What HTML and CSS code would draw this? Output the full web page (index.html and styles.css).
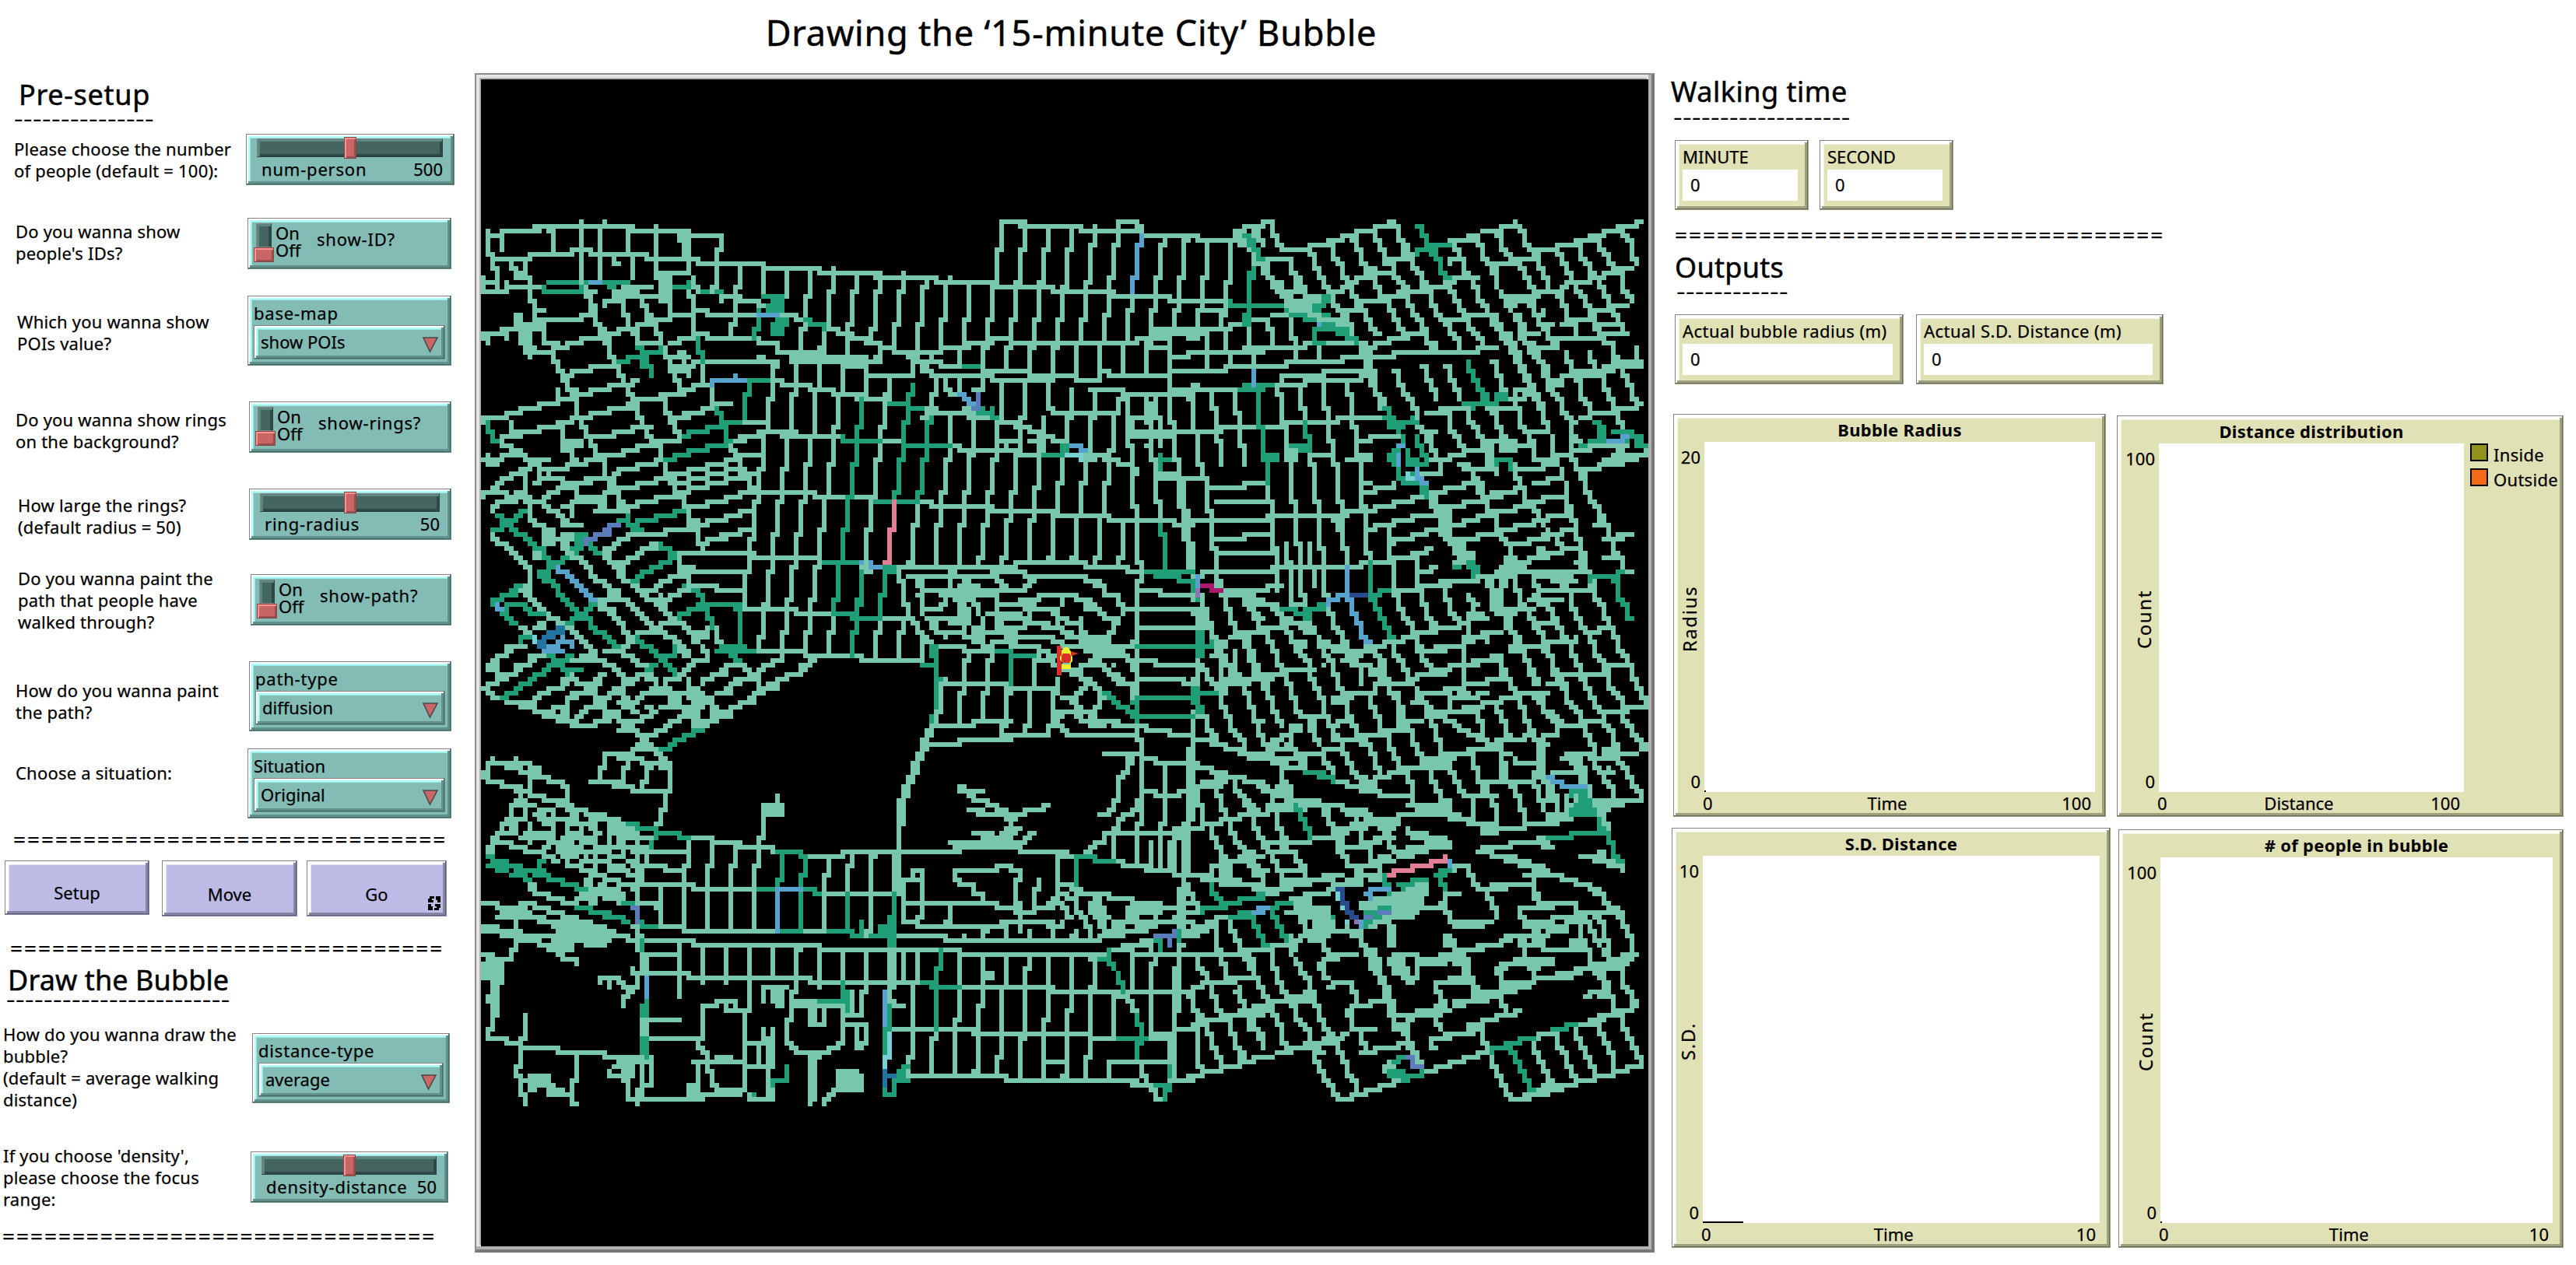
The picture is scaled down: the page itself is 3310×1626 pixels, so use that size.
FILE: index.html
```html
<!DOCTYPE html>
<html lang="en">
<head>
<meta charset="utf-8">
<title>Drawing the ‘15-minute City’ Bubble</title>
<link rel="stylesheet" href="styles.css">
</head>
<body>
<div class="app">
  <aside class="controls">
    <h2 class="heading heading-setup">Pre-setup</h2>
    <div class="dashes dashes-setup">---------------</div>

    <div class="row row-people">
      <p class="label">Please choose the number<br>of people (default = 100):</p>
      <div class="panel slider"><div class="channel"><i class="knob"></i></div><div class="slider-text"><span class="name">num-person</span><span>500</span></div></div>
    </div>
    <div class="row row-ids">
      <p class="label">Do you wanna show<br>people's IDs?</p>
      <div class="panel switch"><div class="toggle"><i></i></div><div class="onoff">On<br>Off</div><span class="name">show-ID?</span></div>
    </div>
    <div class="row row-pois">
      <p class="label">Which you wanna show<br>POIs value?</p>
      <div class="panel chooser"><span class="name">base-map</span><div class="panel choice"><span>show POIs</span><svg viewBox="0 0 20 20"><path d="M1 1H19L9.500 19Z"/></svg></div></div>
    </div>
    <div class="row row-rings">
      <p class="label">Do you wanna show rings<br>on the background?</p>
      <div class="panel switch"><div class="toggle"><i></i></div><div class="onoff">On<br>Off</div><span class="name">show-rings?</span></div>
    </div>
    <div class="row row-radius">
      <p class="label">How large the rings?<br>(default radius = 50)</p>
      <div class="panel slider"><div class="channel"><i class="knob"></i></div><div class="slider-text"><span class="name">ring-radius</span><span>50</span></div></div>
    </div>
    <div class="row row-path">
      <p class="label">Do you wanna paint the<br>path that people have<br>walked through?</p>
      <div class="panel switch"><div class="toggle"><i></i></div><div class="onoff">On<br>Off</div><span class="name">show-path?</span></div>
    </div>
    <div class="row row-type">
      <p class="label">How do you wanna paint<br>the path?</p>
      <div class="panel chooser"><span class="name">path-type</span><div class="panel choice"><span>diffusion</span><svg viewBox="0 0 20 20"><path d="M1 1H19L9.500 19Z"/></svg></div></div>
    </div>
    <div class="row row-situation">
      <p class="label">Choose a situation:</p>
      <div class="panel chooser"><span>Situation</span><div class="panel choice"><span>Original</span><svg viewBox="0 0 20 20"><path d="M1 1H19L9.500 19Z"/></svg></div></div>
    </div>

    <div class="equals equals-a">===============================</div>
    <div class="buttons">
      <button class="panel button button-setup">Setup</button>
      <button class="panel button button-move">Move</button>
      <button class="panel button button-go">Go<svg class="forever" viewBox="0 0 16 18"><path id="turn" d="M2 0H8V3H5V5H7V8H0V3H2ZM10 0H16V8H12V5H10Z"/><path transform="rotate(180 8 9)" d="M2 0H8V3H5V5H7V8H0V3H2ZM10 0H16V8H12V5H10Z"/></svg></button>
    </div>
    <div class="equals equals-b">===============================</div>

    <h2 class="heading heading-draw">Draw the Bubble</h2>
    <div class="dashes dashes-draw">------------------------</div>
    <div class="row row-distance">
      <p class="label">How do you wanna draw the<br>bubble?<br>(default = average walking<br>distance)</p>
      <div class="panel chooser"><span class="name">distance-type</span><div class="panel choice"><span>average</span><svg viewBox="0 0 20 20"><path d="M1 1H19L9.500 19Z"/></svg></div></div>
    </div>
    <div class="row row-density">
      <p class="label">If you choose 'density',<br>please choose the focus<br>range:</p>
      <div class="panel slider"><div class="channel"><i class="knob"></i></div><div class="slider-text"><span class="name">density-distance</span><span>50</span></div></div>
    </div>
    <div class="equals equals-c">===============================</div>
  </aside>

  <main class="world">
    <h1 class="title">Drawing the ‘15-minute City’ Bubble</h1>
    <div class="view">
      <canvas id="map" width="250" height="250"></canvas>
      <svg class="agents" viewBox="0 0 40 44">
        <path d="M4 0H8L10 2V38H4Z" fill="#d92f28"/>
        <path d="M18 6L32 10L20 14Z" fill="#d92f28"/>
        <path d="M12 4L14 2H18L20 4L22 8V12L24 14V20L22 22V30H10V24L12 22L8 18V14L10 12V6Z" fill="#efee30"/>
        <rect x="11" y="22" width="10" height="2" fill="#78c6ad"/>
        <path d="M12 10H20L22 13V19L20 22H12L10 19V13Z" fill="#d92f28"/>
      </svg>
    </div>
  </main>

  <section class="results">
    <h2 class="heading heading-walk">Walking time</h2>
    <div class="dashes dashes-walk">-------------------</div>
    <div class="monitors monitors-time">
      <div class="panel monitor monitor-short"><span>MINUTE</span><output>0</output></div>
      <div class="panel monitor monitor-short"><span>SECOND</span><output>0</output></div>
    </div>
    <div class="equals equals-d">===================================</div>
    <h2 class="heading heading-out">Outputs</h2>
    <div class="dashes dashes-out">------------</div>
    <div class="monitors monitors-out">
      <div class="panel monitor monitor-radius"><span>Actual bubble radius (m)</span><output>0</output></div>
      <div class="panel monitor monitor-sd"><span>Actual S.D. Distance (m)</span><output>0</output></div>
    </div>
    <div class="plots plots-top">
      <div class="panel plot plot-radius">
        <h3>Bubble Radius</h3>
        <div class="yaxis"><span>20</span><span class="ylabel">Radius</span><span>0</span></div>
        <div class="area"><i class="pen pen-dot"></i></div>
        <div class="xaxis"><span>0</span><span>Time</span><span>100</span></div>
      </div>
      <div class="panel plot plot-dist">
        <h3>Distance distribution</h3>
        <div class="yaxis"><span>100</span><span class="ylabel">Count</span><span>0</span></div>
        <div class="area"></div>
        <div class="legend"><div><i class="swatch inside"></i>Inside</div><div><i class="swatch outside"></i>Outside</div></div>
        <div class="xaxis"><span>0</span><span>Distance</span><span>100</span></div>
      </div>
    </div>
    <div class="plots plots-bottom">
      <div class="panel plot plot-sd">
        <h3>S.D. Distance</h3>
        <div class="yaxis"><span>10</span><span class="ylabel">S.D.</span><span>0</span></div>
        <div class="area"><i class="pen pen-line"></i></div>
        <div class="xaxis"><span>0</span><span>Time</span><span>10</span></div>
      </div>
      <div class="panel plot plot-people">
        <h3># of people in bubble</h3>
        <div class="yaxis"><span>100</span><span class="ylabel">Count</span><span>0</span></div>
        <div class="area"><i class="pen pen-dot"></i></div>
        <div class="xaxis"><span>0</span><span>Time</span><span>10</span></div>
      </div>
    </div>
  </section>
</div>
<script src="map.js"></script>
</body>
</html>
```
FILE: styles.css
```css
* { box-sizing: border-box; }
body { margin: 0; background: #fff; color: #000; font: 22px/28px "Noto Sans", "Open Sans", sans-serif; -webkit-text-stroke: .25px #000; }
h1, h2, h3, p { margin: 0; font-weight: 400; }
.app { width: 3310px; height: 1626px; display: grid; grid-template-columns: 610px 1516px 1184px; overflow: hidden; white-space: nowrap; }

/* Raised panels shared by every widget */
.panel {
  --face: #82bcb5; --lite: #b0ffff; --mid: #9de6de; --dark: #456560; --dim: #62908b;
  background: var(--face);
  border: 1px solid #848484;
  border-right-color: var(--dim); border-bottom-color: var(--dim);
  box-shadow: inset -1px -1px var(--dark), inset 2px 2px #fff, inset -4px -4px var(--dim), inset 4px 4px var(--lite), inset 5px 5px var(--mid);
}
.monitor, .plot { --face: #e0e1b5; --lite: #fff; --mid: #f4f5dd; --dark: #6c6c56; --dim: #9e9f7e; }
.button { --face: #bcbce6; --lite: #fff; --mid: #e4e4fa; --dark: #5d5d7a; --dim: #8585a6; }

/* Headings and separators */
.heading { font-size: 36px; line-height: 44px; height: 44px; -webkit-text-stroke-width: .5px; }
.heading-setup { margin: 100px 0 0 24px; letter-spacing: .7px; }
.heading-draw { margin: 10px 0 0 10px; letter-spacing: .1px; }
.heading-walk { margin: 96px 0 0 21px; letter-spacing: .5px; }
.heading-out { margin: 11px 0 0 26px; letter-spacing: .3px; }
.dashes { font-size: 36px; line-height: 20px; height: 20px; letter-spacing: .4px; -webkit-text-stroke-width: 0; transform: scaleY(.75); transform-origin: 0 14px; }
.dashes-setup { margin: -3px 0 0 18px; }
.dashes-draw { margin: -9px 0 0 8px; }
.dashes-walk { margin: -1px 0 0 24px; }
.dashes-out { margin: -3px 0 0 28px; }
.equals { font-size: 28px; line-height: 20px; height: 20px; letter-spacing: 1.96px; }
.equals-a { margin: 16px 0 0 17px; }
.equals-b { margin: 30px 0 0 13px; }
.equals-c { margin: 32px 0 0 3px; }
.equals-d { margin: 21px 0 0 26px; }

/* Question rows */
.row { display: flex; align-items: flex-start; }
.row > .panel { flex: none; }
.label { flex: none; width: 318px; padding-left: 20px; letter-spacing: .2px; }
.row-people { height: 66px; margin-top: 11px; }
.row-people .label { width: 316px; padding-left: 18px; margin-top: 5px; }
.row-people .panel { width: 268px; }
.row-ids { height: 66px; margin-top: 42px; }
.row-ids .label { margin-top: 3px; }
.row-pois { height: 90px; margin-top: 34px; }
.row-pois .label { margin-top: 19px; padding-left: 22px; }
.row-rings { height: 66px; margin-top: 46px; }
.row-rings .label { width: 320px; margin-top: 9px; }
.row-radius { height: 66px; margin-top: 46px; }
.row-radius .label { width: 320px; padding-left: 23px; margin-top: 7px; }
.row-radius .panel { width: 260px; }
.row-path { height: 66px; margin-top: 44px; }
.row-path .label { width: 322px; padding-left: 23px; margin-top: -9px; }
.row-type { height: 90px; margin-top: 46px; }
.row-type .label { width: 320px; margin-top: 23px; }
.row-situation { height: 90px; margin-top: 22px; }
.row-situation .label { margin-top: 17px; }
.row-distance { height: 90px; margin-top: 35px; }
.row-distance .label { width: 324px; padding-left: 4px; margin-top: -13px; }
.row-density { height: 66px; margin-top: 62px; }
.row-density .label { width: 322px; padding-left: 4px; margin-top: -9px; }
.row-density .slider { width: 254px; }

/* Widgets */
.name { letter-spacing: .8px; }
.slider { height: 66px; padding: 5px 14px 0 13px; }
.channel { height: 24px; background: #456560; border: 1px solid #7b8d8b; border-color: #848484 #2e4340 #2e4340 #848484; box-shadow: inset 3px 3px #5c8781, inset -3px -3px #304845; display: flex; justify-content: center; align-items: center; }
.knob, .toggle i { background: #c86666; border: 1px solid #884848; box-shadow: inset 2px 2px #ff9090, inset -2px -2px #994e4e; }
.knob { flex: none; width: 16px; height: 28px; }
.slider-text { display: flex; justify-content: space-between; padding-left: 6px; margin-top: 1px; }
.switch { height: 66px; width: 262px; padding: 6px 0 0 7px; display: flex; }
.row-rings .switch { width: 260px; }
.row-path .switch { width: 258px; }
.toggle { width: 26px; height: 50px; display: flex; flex-direction: column; align-items: center; }
.toggle::before { content: ""; width: 18px; height: 31px; background: #456560; border: 1px solid #848484; border-right-color: #2e4340; box-shadow: inset 3px 3px #5c8781, inset -3px 0 #304845; }
.toggle i { width: 26px; height: 20px; }
.onoff { line-height: 22px; margin: 1px 0 0 2px; width: 53px; }
.switch > span { margin-top: 6px; }
.chooser { width: 262px; height: 90px; padding: 7px 7px 0; }
.row-type .chooser { width: 260px; }
.row-distance .chooser { width: 254px; }
.chooser > span { display: block; height: 30px; }
.choice { height: 44px; padding: 6px 8px 0; display: flex; justify-content: space-between; }
.choice svg { width: 20px; height: 22px; margin-top: 7px; fill: #c86666; stroke: #484848; stroke-width: 1.500; }
.buttons { display: flex; align-items: flex-start; padding-left: 6px; margin-top: 18px; height: 72px; }
.button { font: inherit; padding: 13px 0 0; height: 72px; text-align: center; position: relative; color: #000; }
.button-setup { width: 186px; height: 70px; padding-top: 11px; }
.button-move { width: 174px; margin-left: 16px; }
.button-go { width: 180px; margin-left: 12px; }
.forever { position: absolute; right: 7px; bottom: 7px; width: 16px; height: 18px; fill: #000; }

/* World view */
.world { display: flex; flex-direction: column; }
.title { height: 94px; padding: 16px 0 0 17px; text-align: center; font-size: 45px; line-height: 52px; letter-spacing: .8px; -webkit-text-stroke-width: .5px; }
.view { position: relative; width: 1516px; height: 1516px; padding: 6px; background: #e6e6e6; border: 2px solid #8c8c8c; border-right-color: #777; border-bottom-color: #777; box-shadow: inset -2px -2px #777, inset -6px -6px #b2b2b2; }
.view canvas { display: block; width: 1500px; height: 1500px; background: #000; image-rendering: pixelated; box-shadow: -2px -2px #b2b2b2; }
.agents { position: absolute; left: 742px; top: 734px; width: 40px; height: 44px; }

/* Monitors */
.monitors { display: flex; }
.monitors-time { margin: 21px 0 0 26px; gap: 14px; }
.monitors-out { margin: 21px 0 0 26px; gap: 16px; }
.monitor { height: 90px; padding: 6px 13px 0 9px; display: flex; flex-direction: column; }
.monitor-short { width: 172px; }
.monitor-radius { width: 294px; }
.monitor-sd { width: 318px; }
.monitor > span { height: 31px; letter-spacing: .45px; }
.monitor-short > span { letter-spacing: 0; }
.monitor output { height: 40px; background: #fff; padding: 5px 0 0 10px; }

/* Plots */
.plots { display: flex; align-items: flex-start; }
.plots-top { margin: 38px 0 0 24px; }
.plots-bottom { margin: 14px 0 0 22px; }
.plot { display: grid; grid-template-rows: 35px 1fr 31px; }
.plot-radius { width: 556px; height: 518px; grid-template-columns: 39px 502px 1fr; }
.plot-dist { width: 574px; height: 516px; margin: 2px 0 0 14px; grid-template-columns: 53px 392px 1fr; }
.plot-sd { width: 564px; height: 540px; grid-template-columns: 39px 510px 1fr; }
.plot-people { width: 572px; height: 538px; margin: 2px 0 0 10px; grid-template-columns: 53px 504px 1fr; }
.plot h3 { grid-column: 2; padding-top: 5px; text-align: center; font-size: 22px; font-weight: 700; letter-spacing: .3px; -webkit-text-stroke-width: 0; }
.yaxis { grid-column: 1; grid-row: 2; display: flex; flex-direction: column; justify-content: space-between; align-items: flex-end; padding: 5px 5px 0 0; }
.ylabel { writing-mode: vertical-rl; transform: rotate(180deg); font-size: 24px; letter-spacing: 1.600px; }
.area { grid-column: 2; grid-row: 2; background: #fff; display: flex; align-items: flex-end; }
.pen { height: 2px; background: #000; }
.pen-dot { width: 2px; }
.pen-line { width: 52px; }
.xaxis { grid-column: 2; grid-row: 3; display: flex; justify-content: space-between; padding: 0 5px 0 0; margin-left: -2px; }
.legend { grid-column: 3; grid-row: 2; padding-left: 8px; }
.legend div { display: flex; height: 32px; letter-spacing: .3px; }
.swatch { width: 23px; height: 23px; border: 2px solid #000; margin-right: 7px; }
.inside { background: #91911e; }
.outside { background: #f16a15; }
```
FILE: map.js
```js
// Street network. Each sheet covers one part of the town: x, y is its corner on
// the 1500-unit view, sx and sy its drawing scale. Streets are polylines,
// an entry that starts with R is a filled block.
const COLORS = {
  light: '#78c6ad', dark: '#1f9e78', blue: '#57a3cc', cyan: '#77d0d1', sea: '#2173a0',
  indigo: '#5b7dbc', navy: '#2a4b8c', purple: '#936fb6', pink: '#e07e95', magenta: '#a8196b'
};
const SHEETS = [
{ x: -18, y: 138, sx: 3, sy: 2.6133, streets: {
light: `81,150 81,212 99,220 99,270 117,280 117,322 60,322;81,165 135,165 135,215;135,165 135,150 280,150;260,133 640,133 640,149 855,149 855,290;855,165 980,165 980,210 962,215 962,320 945,330 945,352;333,150 333,215;315,149 333,149;99,243 240,243 240,227 405,227 405,212 480,212 480,227 690,227 690,243 890,243 890,258 1145,258 1145,274 1360,274 1360,290 1560,290;440,115 440,320;513,150 513,310;620,150 620,212 638,220 638,310;728,130 728,300;567,240 575,258 590,258;530,117 530,133;170,250 170,270 190,275;R 181,285 234,310;225,250 225,300 243,305 243,335;60,305 60,352 160,352 150,322;117,322 117,345;150,337 290,337;243,340 243,380 261,390 261,470;R 740,283 790,388;R 828,155 862,235;R 812,155 862,185;R 560,345 665,375;R 180,425 215,480;R 200,460 250,530;R 218,530 250,562;R 760,283 862,297;880,300 890,345;450,330 450,370 477,375 477,410 495,430 495,450 513,470 513,490 540,520 549,560 567,575;590,590 590,620 603,650 620,665 638,710 660,740 675,790 690,810 710,850 740,870 746,905;765,930 765,960 800,985 800,1030 830,1050 855,1090 855,1135 890,1150 890,1195 909,1200 909,1225;R 470,390 505,425;R 505,470 535,500;R 470,345 500,357;530,400 530,384 610,384;600,369 720,369;600,384 603,415 620,430 620,460 638,480 650,510 680,525 730,525;270,447 440,447 440,430 500,430;R 595,330 715,345;675,375 690,420 715,445 735,480 750,510 765,560 790,590 800,630 825,660 825,695;780,375 780,430 870,430 880,415 930,415;700,447 790,447;260,414 300,414;60,494 150,494 150,510;135,478 290,478 280,462 235,462;855,350 873,380 873,490 930,495 930,510 1110,510 1150,525 1197,525 1197,555 1377,555;925,430 1120,430;980,385 980,369 1060,369;1035,384 1120,384 1120,400 1150,400;1215,430 1270,430 1270,447 1305,447 1305,480;505,495 590,495 590,478 650,478 650,462 730,462;440,510 540,510;310,525 380,540 380,525 440,525 440,510;250,540 270,555 335,555 335,540 390,540;243,555 243,575;261,465 297,480 297,520 320,530;335,555 345,600 370,630 385,660 405,690 423,710 423,760 440,790 459,830 480,850 500,880 530,910 531,970 560,990 585,1020 585,1050 603,1080 620,1095;60,508 80,508 80,525;400,619 470,619 470,604 560,604 570,588;370,635 405,635;R 400,680 430,720;410,697 480,697 480,682 550,682 550,666 620,666 650,650;350,680 350,712 420,712;205,745 275,745 275,728 350,728;60,790 80,776 150,776 150,760 205,760 205,745;400,776 480,776 480,760 550,760 550,745 640,745 620,728 680,712 770,712;170,790 170,822 280,822 280,806 360,806 350,790 410,790;500,838 570,838 570,822 640,822 640,806 710,806;135,838 210,838;130,850 160,869 180,885 210,885 215,900 250,917;60,917 140,917 140,900 200,900;80,905 80,932 125,932;225,917 320,917;R 380,848 448,875;360,810 370,850 405,890 405,917 430,917;365,885 405,885;455,917 530,917;385,932 460,932;200,948 240,948 250,920;R 235,920 285,940;275,948 390,948 390,932;510,900 600,900 600,885 650,885 650,869 740,869;710,853 810,853 810,838;600,948 660,948 660,932 720,932 720,917 760,917;150,980 200,965 225,965 225,1040;320,950 320,970;280,960 280,980 370,980;260,995 285,995;360,995 470,995;455,980 550,980 600,948;650,995 720,995 720,980 800,980;60,1027 160,1027 170,1042 240,1042;R 180,1020 232,1050;95,1012 140,995 150,980;60,1027 60,1045;290,1042 350,1027 360,1010 430,1010 430,1030 440,1042 530,1042;525,1027 590,1027;580,1010 660,1010 650,995;R 540,990 575,1015;655,1057 730,1057 730,1042 820,1042;590,1073 655,1073 655,1057;100,1090 120,1073 135,1057 180,1057 180,1042;230,1057 300,1057 300,1073;240,1060 240,1105 270,1137 300,1137;300,1073 350,1090 350,1105 370,1110 400,1140 440,1137;360,1073 405,1073 405,1105;400,1057 440,1057 440,1042;470,1057 520,1057 520,1080;490,1090 625,1090;440,1057 520,1057;R 505,1050 535,1080;830,697 750,697;830,760 900,760;905,745 950,745 945,680;950,728 1020,728;850,776 780,776 800,810 810,838;1062,790 1160,790;R 775,600 850,625;760,572 850,572;815,556 840,556 840,600;790,525 820,525 820,510 870,510;855,635 855,604 890,588;770,715 770,745 785,770;770,965 850,965 850,948 925,948 925,932 990,932 990,917 1060,917 1060,902 1145,902;805,995 860,995 860,980 925,980 925,965 1000,965 1000,948 1070,948;R 775,980 810,1000;800,1027 860,1027 860,1012 925,1012 925,995 990,995 990,980 1060,980 1060,965 1125,965;840,1073 930,1073 930,1057 990,1057 990,1042 1050,1042 1050,1027 1345,1027 1345,1042 1560,1042;855,1121 930,1137 930,1120 990,1120 990,1105 1050,1105 1050,1090 1105,1090;R 848,1115 880,1145;775,1152 895,1152;980,1168 1050,1168 1050,1152 1110,1152;909,1197 930,1197 930,1183 990,1183;810,1230 1110,1230;850,1293 1090,1293;830,1340 960,1340 960,1355 1070,1355;1053,920 1053,940 1071,960 1089,990 1107,1010 1125,1010;1020,869 1035,885 1035,917;1030,853 1070,853 1065,838;873,588 1200,588;R 1172,588 1203,610;1179,600 1179,710 1161,712 1161,820;909,590 909,660;1120,572 1150,572;825,682 875,682 870,666 930,666;1170,650 1220,650 1220,666 1325,666 1325,682 1415,682 1415,697 1540,697;1251,565 1251,588 1540,588;1251,572 1540,572;R 1352,540 1385,590;1269,590 1269,690 1251,700 1251,820;1359,590 1359,675;1341,690 1341,830;1449,600 1449,690 1431,700 1431,800 1413,810 1413,925 1395,935 1395,1030;1540,590 1540,690;1450,604 1540,604;1125,822 1260,822;1060,838 1125,838;1210,838 1440,838;1143,840 1143,945 1125,950 1125,1050 1107,1060 1107,1180 1089,1190 1089,1290 1071,1300 1071,1400;1233,840 1233,940 1215,950 1215,1060 1197,1060 1197,1160 1179,1170 1179,1280 1161,1290 1161,1400 1143,1410 1143,1500 1125,1510 1125,1560;1323,840 1323,930 1305,940 1305,1050 1287,1060 1287,1160 1269,1170 1269,1270 1251,1280 1251,1380 1233,1390 1233,1490 1215,1500 1215,1560;1377,1050 1377,1150 1359,1160 1359,1265 1341,1280 1341,1380 1323,1390 1323,1480 1305,1490 1305,1560;1413,1440 1413,1490 1395,1500 1395,1560;1540,1150 1540,1280;1557,1050 1557,1150;1089,1245 1365,1245 1365,1277;1060,1417 1270,1417 1270,1433 1405,1433;1045,1402 1070,1402;1053,265 1053,325 1035,335 1035,455 1017,465 1017,500;1143,280 1143,360;1233,280 1233,370;1323,280 1323,355 1305,365 1305,440;1287,480 1287,550;1413,270 1413,345 1395,355 1395,475;1377,490 1377,590;1503,300 1503,350 1485,355 1485,455 1467,465 1467,590;1395,478 1430,478 1430,494 1490,494;1470,510 1545,510 1545,525;100,1168 100,1183 150,1200 180,1230 210,1262 245,1285 245,1320 225,1335;225,1355 260,1386 300,1417 340,1450 370,1465;380,1480 420,1495 450,1525 490,1560;200,1355 245,1355;255,1230 261,1245 290,1230;200,1480 240,1500 250,1490;270,1465 300,1465 290,1480 260,1480;145,1560 170,1545 230,1545;R 290,1145 340,1205;340,1183 430,1183;R 360,1160 395,1220;370,1168 430,1168;375,1137 440,1137;395,1245 430,1245 450,1262 480,1290 520,1325 560,1355 600,1390 650,1420 700,1455 750,1490 810,1530 830,1545;R 525,1225 558,1250;540,1250 590,1290 620,1320 650,1340 710,1380 750,1410 790,1450 850,1485 880,1500;365,1205 400,1250;505,1395 560,1435 600,1480 640,1510;530,1230 550,1215 580,1199 610,1183 640,1168 740,1168 780,1152;560,1277 610,1260 650,1245 670,1220 720,1215 740,1195;R 578,1275 608,1300;R 540,1350 590,1380;R 705,1190 735,1210;820,1245 820,1270 840,1277 855,1290 855,1340;820,1277 880,1277;R 815,1285 850,1300;650,1355 730,1355 730,1340 780,1325 790,1308 830,1308;750,1370 740,1375;730,1402 780,1386 800,1370 850,1355;510,1417 560,1417;500,1386 570,1386;R 740,1400 770,1425;R 775,1445 810,1470;660,1512 680,1497 740,1495 750,1465 820,1465;640,1510 640,1530 600,1545 530,1560;850,1500 920,1497 930,1480 962,1480 965,1520 985,1528;870,1528 930,1510 900,1500;R 868,1510 905,1535;1080,1558 1300,1558`,
dark: `297,337 297,352 440,352 440,330;306,322 430,322;459,322 625,322;549,337 575,337;800,337 855,337 855,322;905,352 930,352;960,352 985,352;R 1170,362 1223,388;R 1135,362 1223,372;R 1155,390 1223,420;R 1190,440 1240,468;R 1172,455 1223,500;1125,415 1125,470 1107,480 1107,510;1305,447 1330,447 1330,462 1378,462 1378,485;R 650,535 680,547;680,556 750,556 750,540;670,572 620,572 620,588 585,588;R 670,560 700,605;711,600 711,635;891,505 891,550 909,560 909,590;962,745 980,780 1000,815 1000,853;830,838 850,838 850,822 930,822 930,806 1000,806;765,917 800,917 800,900 850,900 850,885 925,885 925,869 1005,869;R 990,845 1025,860;975,790 1060,790;1071,780 1071,712 1089,705 1089,650 1165,650;80,790 85,810 99,820 99,835 117,855;115,1105 135,1105;R 128,1113 178,1145;190,1121 190,1105 210,1105 205,1090 230,1090;100,1152 135,1152;165,1152 190,1152 190,1168 225,1168 240,1199 265,1199 265,1215 300,1215;297,1230 310,1262 370,1262 370,1245 390,1245;R 308,1258 340,1280;R 272,1290 320,1313;300,1325 330,1325 345,1355 370,1385 400,1402 420,1417;180,1340 210,1340;165,1355 190,1355;100,1402 100,1386 130,1386 140,1370 190,1370;130,1433 150,1433 155,1405 220,1402 220,1417 245,1417 245,1433 300,1433;150,1450 170,1450 190,1465;R 415,1425 465,1440;400,1450 480,1450;380,1465 405,1465;455,1417 480,1417 490,1402;470,1465 500,1480 520,1497 550,1512 560,1530 590,1545;R 400,1207 445,1222;423,1225 420,1168 450,1168;R 435,1175 450,1215;477,1199 480,1215 500,1215 500,1230 520,1230;580,1120 625,1120 620,1105;615,1137 660,1137;635,1152 680,1152;650,1120 725,1120 725,1105 800,1105 800,1090 845,1090;745,1199 750,1215 790,1215 800,1230 790,1245 765,1260 735,1275 700,1290 670,1300 660,1325 635,1325;200,1528 230,1512 250,1512;1370,1262 1515,1262;1521,710 1521,805 1503,810 1503,930 1485,940 1485,1040 1467,1045 1467,1150 1449,1160 1449,1260;1431,1270 1431,1380 1413,1390 1413,1435 1510,1435;1521,1300 1521,1390 1503,1400 1503,1490 1485,1500 1485,1560;1445,838 1450,853 1560,853;1480,1450 1560,1450;1053,1410 1053,1540;1035,1417 1053,1417;R 975,1540 1075,1550;R 958,1550 1020,1562;1065,1560 1115,1560;890,1402 1045,1402;870,1355 890,1355 900,1386 910,1395;850,1417 935,1417;930,1417 930,1450 945,1450 945,1480;815,1450 820,1433 860,1433;650,1510 660,1528 680,1528;675,1545 710,1545 735,1560;835,1340 840,1340;795,1560 805,1560`,
blue: `477,322 513,322;1125,430 1200,430;945,665 945,650 1075,650;1035,635 1035,650;117,1405 117,1417 140,1417;350,1280 350,1293 395,1293 395,1308 420,1325 440,1340 440,1355 465,1355 480,1386 500,1386;350,1528 405,1528 405,1545;R 305,1538 355,1550;368,1510 368,1528;R 290,1553 375,1566;1521,1262 1521,1262;1557,1262 1557,1277`,
cyan: `261,1515 261,1528`,
sea: `R 272,1523 305,1548;297,1512 330,1512 320,1497 360,1497 355,1480 375,1480`,
indigo: `459,1199 477,1183 500,1183 495,1168 540,1168 535,1152 555,1152 555,1137 590,1137` } },

{ x: 482, y: 138, sx: 3, sy: 2.6133, streets: {
light: `0,290 100,290 100,305;75,305 310,305 310,321 540,321 540,337 760,337 760,353 1000,353 1000,369 1210,369 1210,384 1430,384;3,290 3,355;543,320 543,212 561,212 561,117 655,117;630,133 870,133 870,149 1105,149;1010,149 1010,117 1085,117 1100,133 1100,149;1110,165 1320,165 1320,180 1470,180;R 1455,142 1490,195;1490,133 1560,133;1540,150 1551,180;1495,149 1495,133;1470,190 1510,196 1530,212 1535,240;R 1525,235 1560,265;651,140 651,212 633,215 633,320 615,325 615,440 597,450 597,525;741,140 741,212 723,215 723,320 705,325 705,430 687,440 687,520;831,140 831,212 813,215 813,320 795,330 795,430 777,440 777,520;921,130 921,195 903,200 903,320 885,325 885,430 867,440 867,520;1011,150 1011,195 993,200 993,300 975,310 975,425 957,435 957,520;1065,370 1065,410 1047,420 1047,520;1191,170 1191,195 1173,200 1173,300 1155,310 1155,410 1137,415 1137,500;1263,180 1263,300 1245,305 1245,410 1227,420 1227,490;1353,190 1353,300 1335,305 1335,410;1443,190 1443,315 1425,325 1425,410 1407,425 1407,475;1317,490 1317,415 1425,415;93,310 93,350 75,355 75,475 57,480 57,510 0,510;183,285 183,350 165,355 165,460 147,465 147,550;273,320 273,335 255,340 255,460 237,465 237,560;345,330 345,440 327,445 327,550;435,330 435,440 417,445 417,525;525,340 525,440 507,445 507,510;363,300 363,315;1263,180 1285,180;410,525 530,525;510,510 590,510;590,525 1090,525 1090,510 1210,510;330,540 440,540;140,556 335,556;30,510 40,525 100,525 100,540 140,540 150,556;1137,478 1450,478 1450,462 1490,462;1150,494 1340,494;1209,490 1209,680;R 1112,510 1145,545;0,572 40,572 40,700;0,604 40,604;50,588 95,588 95,540;R 70,565 100,580;40,635 225,635 219,570;R 200,560 245,580;237,570 255,600 270,615 295,619;290,635 530,635 520,650;245,588 330,588 330,604 480,604;265,604 280,604;291,565 291,590;399,550 399,600;489,560 507,545 507,530;489,560 489,680 445,682;489,620 670,620;520,650 760,650;R 660,628 760,655;760,635 850,635;579,615 579,560 597,545 597,530;687,530 669,550 669,620;759,530 759,630;780,540 760,540;849,540 849,650 940,650 939,530;1029,630 1029,530;1119,520 1119,630;940,620 980,620 980,635 1209,635;1110,540 1209,540;1209,620 1430,620 1430,604 1560,604;1215,572 1285,572 1285,556 1560,556;1353,490 1353,610;1300,510 1350,500;1443,560 1443,600;1533,560 1533,605;1425,480 1425,545;1515,550 1515,447 1560,447;1280,510 1300,510;0,697 40,697;0,712 110,712 110,700;129,650 129,700 111,710 111,800 93,810 93,910 75,920 75,1050;95,853 175,853;0,1042 80,1042;309,640 309,680 291,690 291,750;340,635 345,660 370,680 385,697;399,640 399,690;270,745 315,745;250,776 280,776 280,760 450,760 430,776 530,776;410,745 450,745;363,770 363,900 345,920 345,1010 327,1030 327,1065;453,780 453,880 435,900 435,1010 417,1020 417,1070;543,780 543,910 525,915 525,1010 507,1020 507,1090;561,660 561,780;651,650 651,770 633,780 633,880 615,900 615,1010 597,1020 597,1090;741,660 741,745;723,770 723,820;705,850 705,1000 687,1010 687,1090;741,745 760,745 750,760 1010,760;831,680 831,760 813,780 813,850;900,682 1035,682 1035,697 1290,697;921,690 921,760 903,780 903,890;1011,760 1011,712 1040,700;993,765 993,880 975,890 975,990 957,1000 957,1090;795,910 795,990 777,1000 777,1090;885,910 885,990 867,1000 867,1090;540,790 640,790;610,806 670,806;665,822 730,822;540,853 640,853;579,865 579,875;400,885 640,885;355,869 400,869;620,900 710,900;660,853 730,853;700,838 765,838;R 697,815 732,890;750,853 810,853;880,900 980,900;885,917 925,917;950,917 1015,917 1010,932 1060,932;1047,700 1047,870;1040,776 1180,776;1040,838 1200,838;1040,822 1160,822;1170,822 1410,822;R 1112,705 1128,800;R 1128,720 1145,815;1155,700 1155,780;R 1045,770 1073,835;R 1165,770 1180,885;1137,800 1137,915 1155,920;1110,869 1137,869;1065,865 1065,940 1080,950 1080,965 1065,970 1065,1070 1083,1080 1083,1250 1100,1260 1100,1320 1083,1330 1083,1540;1209,700 1209,790 1227,790 1227,905 1245,920 1245,960;1155,920 1155,1050 1173,1060 1173,1120;R 1165,957 1235,985;1160,980 1355,980;R 1237,980 1272,1080;R 1255,1085 1290,1190;R 1273,1190 1308,1285;1218,1137 1305,1137;1209,682 1470,682;1299,666 1320,666;1285,712 1299,720 1299,820;1317,830 1317,935 1335,940 1335,970;1353,980 1353,1090;1371,690 1371,740 1389,750 1389,850 1407,860 1407,935;1461,690 1461,750 1479,760 1479,860 1497,870 1497,935;1380,806 1560,806;1360,1010 1500,1010 1500,995 1560,995;1353,1090 1371,1090 1371,1210 1389,1220 1389,1320 1407,1340;1385,1058 1560,1058;970,1120 1230,1120;1280,1120 1560,1120;1380,1183 1500,1183 1500,1168 1560,1168;1395,1230 1560,1230;1330,1293 1560,1293;1410,1355 1560,1355;1330,1300 1330,1310;250,1058 290,1058 290,1073 530,1073 530,1089 780,1089 780,1105 980,1105 980,1120;57,1060 57,1150 39,1155 39,1260;237,1065 237,1130 219,1140 219,1260 200,1262;327,1080 327,1130 309,1140 309,1260;417,1080 417,1130 399,1140 399,1265;507,1090 507,1130 489,1140 489,1240 471,1250 471,1270;597,1095 597,1115 579,1120 579,1240 561,1250 561,1270;687,1095 687,1115 669,1120 669,1240;759,1105 759,1230 741,1240 741,1255;849,1110 849,1230 831,1245;939,1115 939,1230 921,1240 921,1270;1029,1130 1029,1230 1011,1240 1011,1265;155,1277 620,1277;610,1262 890,1262 890,1277 1050,1277 1050,1293 1110,1293;165,1280 165,1320 183,1330 183,1400 201,1410 201,1440 240,1480 255,1500 255,1560;21,1270 21,1293 60,1293;93,1450 225,1450;93,1465 93,1490 75,1500 75,1560;183,1460 183,1480 165,1490 165,1560;200,1308 530,1308;R 355,1285 390,1300;230,1325 260,1325;240,1340 260,1340 270,1355;230,1370 255,1370 255,1440;255,1417 330,1417 345,1385 320,1370;363,1290 363,1350;270,1355 390,1355;320,1370 400,1370;R 375,1380 405,1395;400,1400 400,1410 430,1430;417,1320 440,1325;400,1340 465,1340;417,1340 417,1400;410,1355 430,1385;520,1293 650,1293 650,1308 890,1308;400,1355 440,1355 650,1355 665,1340;535,1308 543,1330 570,1340;660,1308 680,1325 690,1325;R 645,1330 680,1345;543,1355 543,1435;430,1370 540,1370;550,1402 680,1402;R 630,1380 705,1395;453,1380 470,1400 470,1440;400,1435 440,1435;270,1450 440,1450;550,1450 640,1450;500,1435 640,1435;R 660,1395 675,1460;650,1417 780,1417;R 265,1440 290,1465;R 283,1465 318,1485;355,1465 440,1465;430,1417 410,1417;489,1445 489,1480;300,1497 420,1497 420,1512 490,1512;417,1465 417,1490;R 255,1500 283,1535;R 283,1520 300,1535;345,1497 345,1515;453,1480 480,1480;460,1497 620,1497;550,1480 650,1480 650,1450;R 520,1430 550,1445;540,1465 560,1465;460,1528 490,1528 490,1500;R 570,1505 622,1535;520,1528 620,1528;620,1512 765,1512;660,1465 740,1465;730,1480 800,1480;790,1497 835,1497;820,1512 865,1512;700,1370 855,1370 855,1386 900,1386 890,1402 920,1402;795,1380 795,1400;660,1417 780,1417 750,1433;777,1430 777,1460;770,1450 820,1450 820,1465 870,1465 870,1480 885,1490 885,1550;910,1512 975,1512;880,1417 935,1417 935,1433 955,1433 955,1450 1015,1450;R 878,1400 925,1425;R 850,1435 875,1455;885,1325 930,1325 920,1340 960,1340 960,1355 975,1370 1010,1370 1010,1386 1020,1400 1035,1402 1020,1433;1010,1450 993,1470 993,1490 975,1500 975,1528;1030,1417 1320,1417;1290,1433 1320,1433;1090,1355 1180,1355 1180,1370 1330,1370;1083,1480 1340,1480;750,1528 800,1528;620,1545 710,1545;410,1560 540,1560;320,1545 420,1545;R 860,1515 925,1545;905,1528 970,1528;880,1560 1035,1560;1040,1545 1080,1528;1299,1290 1299,1340;1299,1370 1299,1390;R 1308,1412 1360,1490;1335,1385 1335,1400;1425,1375 1425,1400 1443,1420 1443,1450 1461,1480 1480,1500 1500,1528 1520,1545 1530,1560;1490,1385 1535,1390 1540,1430 1560,1450;1371,1460 1371,1490 1389,1510 1400,1540;R 1380,1520 1430,1545;1440,1515 1510,1510 1515,1497 1560,1497;1407,1325 1407,1370 1530,1370`,
dark: `410,604 475,604;1443,380 1443,400 1560,400;1515,430 1515,305 1533,300 1533,270;1497,440 1497,465;1510,435 1497,435;1490,165 1515,165 1515,180 1533,195 1550,220;1510,666 1560,666;1475,682 1560,682;1551,690 1551,800;219,660 219,680 201,690 201,780 183,790 183,910 165,920 165,1020 147,1030 147,1050;120,728 200,728;200,745 260,745;291,770 291,790 273,795 273,910 255,920 255,1025 237,1030 237,1050;0,853 85,853;190,869 355,869;70,1058 140,1058;155,1058 245,1058;21,710 21,805 3,810 3,930;R 465,738 498,765;490,760 530,760;525,740 525,776 550,776;715,900 800,900;R 788,865 820,890;1173,895 1173,950;1173,917 1215,917;R 105,1272 155,1295;111,1295 111,1365 93,1375 93,1450;21,1305 21,1390 3,1395 3,1500;0,1450 85,1450;0,1262 10,1262;1110,1293 1160,1293;1150,1308 1250,1308;1240,1325 1300,1325;1180,1293 1290,1293;1173,1130 1173,1165 1191,1175 1191,1290;1299,1335 1299,1360;1317,1380 1317,1390;R 285,1540 315,1567;R 535,1552 603,1567;1075,1545 1310,1545;R 1310,1492 1342,1567;1342,1545 1375,1545 1371,1525`,
blue: `1101,165 1101,195 1083,200 1083,300 1065,305 1065,355;1533,615 1533,670;390,697 415,697 415,712 435,712 435,728 460,728;825,869 870,869 870,885 890,885;21,1262 21,1262;57,1262 57,1277 100,1277;1317,1305 1317,1345`,
cyan: `805,900 867,900 867,915`,
indigo: `471,695 471,728 453,745`,
purple: `1317,1350 1317,1375`,
pink: `147,1055 147,1150 129,1155 129,1262 105,1262`,
magenta: `1330,1340 1375,1340 1375,1355 1410,1355` } },

{ x: 982, y: 138, sx: 2.9037, sy: 2.6133, streets: {
light: `0,133 70,133;60,117 105,117 105,150 118,165 118,180 135,190 150,215;32,133 50,165 65,190;140,212 240,212 240,196 310,196 310,180 370,180 370,165 415,165 415,150 480,150 480,133 535,133 535,117 555,117;555,133 575,133 575,165 590,190;R 583,190 613,230;625,230 630,265 650,280 655,310;R 652,315 683,345;5,180 10,195 30,225 50,250 75,270 75,290 100,310 120,330 135,360;R 60,250 90,283;R 95,315 145,345;R 112,345 230,360;R 145,375 250,420;R 130,360 180,375;R 215,360 280,392;R 235,420 285,437;R 270,437 385,465;R 335,455 385,468;70,245 130,240;155,240 175,240 175,270 190,285 200,320 215,335;R 182,300 213,350;240,212 250,240 260,260 280,290 300,310 305,345 325,360 330,385 350,400 350,415;320,200 335,220 335,250 355,260 370,290 380,320;390,170 410,200 430,215 440,245 455,260;485,140 485,170 500,190 520,225;R 513,235 560,265;R 443,268 493,295;485,290 485,320 505,350 520,370 535,400 550,425 570,440 575,480;305,353 370,353 385,337 400,337 400,322 430,306 480,306;490,285 560,285 560,265;555,250 560,290 575,310 600,330 600,353;560,243 620,243;395,345 415,380 440,400;440,384 510,384 530,368 600,368;580,353 700,353 720,337 780,320 800,306 860,306;345,415 455,415 450,430 470,450 490,490 505,500;480,540 480,525 540,525 540,510 610,510 610,494 685,494 690,540;590,494 575,478;600,384 620,410 640,430 655,470 680,480;690,370 710,410 730,430 755,460 765,490 790,510 795,545;R 685,525 718,560;770,330 785,370 800,400 820,430 905,430 905,415;745,447 830,440 840,470 870,490 885,530;865,540 930,540;R 430,510 460,535;550,556 875,556;355,572 560,572;150,588 370,588;0,604 160,604;130,655 135,635 300,635 290,619 480,619;215,650 440,650;0,540 230,540 230,525 400,525;R 425,530 475,580;R 443,580 475,635;R 427,628 493,640;R 460,640 493,670;480,680 500,690 505,740;R 495,705 528,735;100,430 165,430;85,447 85,475 105,480 105,530;172,440 172,490 190,510 190,575;276,530 276,575;15,445 15,530;30,550 30,600;15,447 90,447;R 355,415 388,437;400,470 400,495;760,180 870,180;870,180 870,165 830,165;885,150 950,150 950,133 1030,133 1045,150 1045,175 1060,190 1065,215;1005,117 1015,117;785,200 800,212 800,225;765,260 765,243 820,243 820,270 840,290 850,320 870,340 875,370 890,390 910,400;870,180 885,190 885,220 905,240 905,258 1010,258 1010,243 1100,243;930,165 955,165 955,190 970,210 985,240;R 983,235 1060,250;R 1060,205 1085,250;1080,227 1095,240;R 915,265 945,297;R 930,297 945,340;R 948,340 962,375;R 966,375 1010,407;R 982,407 997,420;R 1000,420 1028,450;R 1018,450 1045,515;R 1035,515 1080,530;1055,540 1070,550;R 1072,540 1100,580;R 1088,580 1118,600;R 1105,600 1135,640;R 1122,640 1190,670;1135,670 1160,690;960,375 1080,375;1000,384 1085,384 1085,368;1100,260 1105,290 1130,310 1135,340 1150,353;1030,260 1050,290 1060,320 1080,340;R 1075,340 1100,375;R 895,385 912,430;R 912,430 947,465;R 930,455 962,485;R 948,485 1000,520;R 965,510 1015,535;R 982,535 1020,560;R 1000,555 1032,600;R 1018,595 1050,625;R 1035,625 1068,660;R 1052,655 1083,690;R 1070,690 1100,720;R 1088,718 1115,735;1110,740 1110,775 1130,790 1130,830;R 1140,830 1152,895;R 1140,895 1170,940;R 1175,940 1190,985;1200,990 1200,1060;R 1192,1060 1222,1110;R 1208,1110 1240,1130;1233,1130 1233,1170 1250,1180 1250,1230;R 1245,1230 1275,1285;R 1227,1255 1275,1270;1265,1285 1285,1300;1100,227 1110,212 1160,212 1160,196 1230,196 1230,180 1300,180 1285,165 1330,165 1340,150 1400,150 1390,133 1465,133 1460,117 1485,117;1165,212 1180,240 1195,270 1215,300 1215,320;1245,190 1255,225 1270,240 1290,270 1300,305;1320,180 1325,195 1345,210 1360,240 1375,270 1400,290;1410,150 1430,170 1435,200 1450,225 1460,245 1460,262;1370,274 1450,274;1330,290 1400,290 1410,330 1430,345 1440,385;1110,353 1180,353 1180,337 1225,322 1290,322 1300,306 1330,306;1165,350 1180,385 1195,420 1200,447;1240,330 1250,360 1270,385 1285,415 1300,430;1320,310 1330,345 1350,370 1355,395;1355,400 1430,400;1285,430 1310,415 1380,415 1390,450 1410,480;1200,447 1275,447;1180,460 1230,460 1233,490;1300,435 1310,460 1325,480;1320,494 1430,494;1210,447 1290,447;1325,465 1385,462;1060,384 1080,420 1100,440 1115,465 1130,490 1155,510 1165,535;1125,465 1150,462;1085,430 1110,430 1110,415;1050,494 1100,494;1140,510 1340,510 1345,525 1365,530 1375,560 1390,580;1095,540 1165,540;1460,540 1460,570 1475,600;1335,604 1475,604;1380,588 1480,588;1200,550 1200,580 1215,600 1215,620;1285,550 1285,580 1300,600;1235,619 1380,619 1350,604;1185,635 1330,635;R 1140,645 1190,670;1235,640 1245,670 1260,690 1275,720 1290,745 1285,760;1330,640 1345,670 1360,690 1370,720 1380,745;1410,610 1420,650 1440,670 1445,700 1465,715 1480,728;1255,776 1330,760;1280,760 1380,760 1380,745 1465,745;1390,750 1390,780 1410,800;1165,690 1185,710 1185,745 1200,760 1215,775;R 1210,780 1240,805;R 1210,805 1225,895;1210,885 1295,885 1290,869;1240,835 1260,855;1190,900 1215,905 1220,920;R 1218,910 1240,925;1240,948 1325,948 1325,932 1400,932;1330,932 1330,917;1350,917 1465,917;1370,900 1400,900 1400,885;1425,900 1500,900;1385,885 1410,885;1500,885 1500,905;1280,869 1425,869;1240,930 1250,960;R 1245,955 1275,985;1270,990 1270,1015 1285,1020 1290,1050 1305,1060 1315,1090 1320,1100;R 1312,1100 1345,1140;1300,1137 1340,1137;1350,1140 1355,1165 1375,1185;1330,1183 1400,1183;1385,1168 1450,1168;1375,1190 1375,1210 1390,1225 1410,1250 1410,1280 1430,1290 1450,1293;1335,1245 1410,1245;110,666 230,666;118,670 118,690 137,700 137,790 155,800 155,900;R 147,885 195,925;172,920 172,1050 190,1060 190,1190 205,1200 205,1260;205,670 205,730 222,740 222,790;240,895 240,930 258,940 258,1050 276,1060 276,1200 293,1210 293,1270;293,660 293,740 310,750 310,845 328,860 328,930 345,940 345,1050 363,1070 363,1080;380,660 380,690 398,700 398,800 415,810 415,900 432,910 432,1080 450,1090 450,1220 467,1240;340,776 520,776;150,791 350,791;0,806 150,806;240,900 320,900;375,917 475,917;R 410,895 475,915;460,838 590,838;415,853 470,853;0,870 0,930;370,1089 490,1089;80,1105 385,1105;0,1058 100,1058 101,1200 118,1210 118,1350;84,1005 84,1050;0,995 75,995;0,1120 90,1120;0,1168 100,1168;0,1230 110,1230;0,1293 115,1293;110,1277 440,1277;430,1262 550,1262;330,1110 350,1120;R 340,1110 370,1155;363,1150 363,1210 380,1220 380,1270;153,1195 153,1260;R 150,1255 180,1270;240,1195 240,1270;172,1285 172,1400;205,1285 205,1350 222,1370 222,1400;258,1285 258,1340;293,1290 293,1350 310,1370;0,1402 120,1402;130,1340 80,1345;0,1355 80,1355;170,1402 225,1402;550,619 570,619 570,650 590,670 590,690 610,700 620,730 640,745 640,775;655,604 680,604 680,640 690,670 710,690 720,720;745,604 770,604 770,640 785,660 800,690 800,720;915,588 940,588 940,620 955,640 960,660 975,680;1000,700 1005,682 1080,682;980,712 1040,712 1060,697 1085,697;725,745 840,745;670,760 770,760;R 722,735 770,770;765,770 765,800 785,820 795,850 805,870 830,880;830,750 830,780 850,790 860,820 885,840 885,870;920,760 940,745 1005,745;910,745 930,745 940,790 955,820 965,845;1000,728 1020,760 1030,790 1040,810;1090,730 1110,745 1115,780;650,760 640,775;650,790 655,820;R 655,815 718,835;R 670,835 700,860;690,870 710,885 710,915;690,917 760,917;760,900 820,900 820,885 895,885;730,925 730,965 660,965;R 895,865 928,935;910,853 1000,853;R 950,840 995,895;1040,822 1135,822;1060,838 1080,860 1080,900;R 1070,910 1165,920;1000,885 1010,869 1070,869;1010,948 1120,948 1120,932 1165,932;790,932 840,932;810,948 930,948 935,965;850,950 850,980 880,1000 885,1030 900,1050 905,1090;1000,930 1015,960 1025,1000 1040,1010 1045,1040 1060,1055;440,1027 490,1027 490,1012 560,1012 560,995;440,995 470,995;470,1089 495,1073 560,1073 560,1058 620,1058 620,1042 680,1042;455,1073 455,1080;480,1137 560,1137 560,1120 620,1120 620,1105 690,1105;455,1152 490,1152;540,1183 630,1183 630,1168 680,1168 680,1152 740,1152;537,1150 537,1235 555,1245 645,1245;560,1199 545,1190;620,1230 680,1230 680,1215 700,1215;690,1042 715,1042;690,1027 750,1027 750,1010 810,1010 810,995 870,995;715,1073 820,1073 820,1058 905,1058;745,1137 820,1137 820,1120 870,1120 880,1105 930,1105;760,1090 750,1100;790,1183 870,1183 870,1168 960,1168;895,1089 1010,1089 1010,1073 1080,1073;930,1105 940,1150;R 930,1090 945,1160;960,1168 980,1185 980,1200;865,1010 885,1020;920,1042 930,1027 1010,1027 1005,1010 1030,1010;1070,995 1130,995 1130,980 1190,980;885,1042 950,1042;1050,1058 1120,1058 1120,1042 1200,1042;1060,1058 1075,1080 1095,1100 1110,1130;950,1152 1010,1152 1010,1137 1085,1137;1070,1120 1130,1120 1130,1105 1220,1105;R 1122,1137 1138,1185;985,1215 1000,1199 1060,1199 1055,1183 1130,1183;1120,1168 1190,1168 1190,1152 1235,1152;1110,1168 1150,1168;1160,1183 1180,1200 1190,1215;1090,1230 1120,1215;1120,1230 1190,1230 1180,1215 1245,1215;1010,1262 1060,1262 1060,1245 1135,1245;R 983,1215 1000,1235;R 965,1235 1015,1265;R 950,1270 1050,1285;R 930,1285 1035,1300;R 685,1015 700,1045;R 685,1045 718,1075;R 702,1075 750,1110;R 720,1105 768,1170;R 740,1170 785,1185;R 755,1185 822,1215;R 772,1215 825,1235;R 790,1230 860,1250;R 775,1250 825,1265;R 860,1295 985,1315;R 912,1300 928,1345;R 950,1315 980,1345;R 895,1315 928,1345;R 915,1345 962,1420;R 930,1410 1010,1435;R 860,1420 900,1440;865,1308 985,1308;690,1277 715,1277;645,1293 690,1293;985,1293 1130,1293 1160,1308;1075,1308 1220,1308 1220,1293 1280,1293;R 1140,1293 1220,1325;1180,1325 1205,1350 1310,1355;1085,1310 1095,1350 1100,1370;1105,1386 1190,1386;1190,1355 1215,1355;1100,1355 1190,1355;R 1190,1320 1250,1335;1290,1330 1305,1355;R 1270,1310 1310,1325;1000,1310 1005,1340 1025,1360 1030,1390 1050,1400 1060,1440;1070,1380 1130,1400 1150,1430 1165,1465 1190,1490 1200,1530;1065,1386 1095,1375;1215,1370 1220,1400 1240,1420 1250,1460 1270,1480 1280,1512 1300,1530 1305,1555;1305,1355 1310,1390 1330,1410 1335,1440 1360,1465 1370,1490 1390,1510 1395,1550;1070,1480 1090,1465 1170,1465;1060,1450 1085,1450 1090,1490 1110,1500 1120,1540;R 965,1450 1000,1490;R 985,1485 1012,1510;R 1000,1510 1028,1545;R 985,1550 1040,1567;1015,1417 1070,1417;1110,1528 1240,1528 1240,1512;1270,1497 1310,1497 1330,1480 1380,1480;1120,1545 1130,1560;1210,1545 1215,1560;555,1260 555,1350 570,1370 575,1400 590,1430 600,1450;545,1355 660,1355;640,1340 755,1340;640,1245 640,1350;725,1325 860,1325;655,1355 660,1390 675,1400 680,1440 695,1450 710,1485;745,1340 750,1380 765,1390 770,1430 785,1440 790,1465 830,1465;700,1480 790,1480;835,1370 850,1390 870,1400;855,1400 855,1430;610,1450 620,1480 630,1497 720,1497;515,1528 590,1528 595,1512 640,1512;640,1510 650,1545 665,1560;690,1560 745,1545 810,1545;833,1440 833,1500;840,1450 910,1450;820,1560 815,1512 890,1512 890,1497 960,1497;R 810,1505 860,1535;900,1528 880,1512;905,1500 960,1490;0,1497 85,1497 70,1480 150,1480;20,1402 30,1430 50,1460 60,1480;0,1386 60,1386 55,1400;R 95,1405 128,1425;R 130,1440 175,1470;110,1425 130,1440 150,1480 170,1500 180,1530 215,1530;85,1500 85,1520 105,1540;170,1465 215,1465 200,1480 245,1480;R 218,1475 265,1500;240,1465 245,1475;270,1510 290,1535 340,1540;310,1417 325,1440 330,1465 345,1480 360,1520 380,1545;290,1560 300,1560;320,1560 490,1560;0,1512 20,1545;210,1545 225,1545`,
dark: `0,400 145,400;155,415 155,415;15,290 15,460;30,270 30,300;0,165 20,170 32,195 50,205 50,230 65,243;635,133 660,133 660,160 677,165 680,190;R 670,190 770,203;635,227 640,212 720,212;R 687,200 718,232;R 705,235 735,250;735,260 735,280 750,290 750,306 770,306;R 285,362 318,390;R 268,390 300,405;R 250,393 285,420;165,430 230,430;R 218,437 268,452;285,430 318,430;260,525 260,478 340,478;R 285,457 335,483;R 338,470 388,500;R 375,500 425,515;415,525 420,520;250,525 285,525;0,682 55,682;5,666 105,666;50,690 50,790 67,800 67,900;R 60,895 128,923;84,920 84,1000;222,790 225,830 240,840 240,885;R 165,862 248,877;R 197,877 248,892;833,585 833,605 850,615 850,635 868,645 875,670 890,685;R 878,690 910,735;R 930,692 980,718;R 912,715 945,732;810,728 930,728;850,745 850,745;R 513,738 545,752;R 528,752 545,765;R 513,765 562,782;R 530,782 595,812;590,791 650,791;625,775 625,790;R 563,812 580,830;588,835 588,855;640,835 640,860 660,870 660,885 678,900;R 548,877 580,892;R 530,892 562,925;555,930 555,930;R 600,880 615,905;R 600,905 650,938;R 668,895 685,940;R 650,920 685,940;572,940 572,980 640,980;R 583,988 665,1002;R 650,1000 683,1035;677,1045 677,1045;640,945 620,960;945,932 930,932;945,917 990,917 990,950;R 825,1255 858,1285;R 843,1270 876,1300;850,1310 850,1310;775,1277 800,1277;1297,791 1325,791;R 1312,797 1345,845;R 1280,848 1345,860;1250,869 1275,869;1370,822 1450,822;1425,853 1440,838 1470,838;R 1452,832 1487,875;1470,869 1500,869;467,1255 467,1390;500,1355 545,1355;R 460,1363 510,1378;R 460,1378 493,1393;480,1410 500,1417 505,1440 520,1450 520,1480 537,1485 540,1512 560,1512;130,1417 195,1417;218,1417 285,1417;R 182,1425 248,1442;R 218,1440 248,1458;270,1402 300,1402;1280,1325 1300,1308 1395,1308 1390,1293 1415,1293;1390,1310 1390,1370 1410,1380 1410,1405 1425,1410 1430,1435 1442,1450;R 1370,1312 1397,1330`,
blue: `32,615 32,670;276,462 276,462;570,869 595,869;572,895 572,935;640,945 640,965 655,980 675,995;1350,853 1410,853 1410,838 1430,838;380,1275 380,1390;345,1370 400,1370;310,1408 310,1386 350,1386;398,1390 398,1430 415,1440 415,1465 430,1470 440,1497 455,1512 455,1530 475,1530`,
cyan: `R 600,957 615,985;R 600,972 632,985`,
navy: `390,1371 455,1371` } },

{ x: -18, y: 728, sx: 3, sy: 2.529, streets: {
light: `55,140 80,140 80,125 110,125 110,110 155,108;110,93 180,93 180,78 200,78;185,63 245,63 245,47 280,30 310,30;75,62 120,62 120,47 100,47;R 75,55 108,85;110,78 115,90;110,32 160,32 160,17 200,5 230,3;75,150 100,155 110,170;235,32 290,32;145,185 265,185 265,170 285,170 285,155 320,155;200,200 265,200;255,215 340,215 330,200 380,200 380,185 400,170 430,170;310,140 365,140 360,125 380,125 370,108 430,108;290,230 380,230 370,215;350,245 430,245 420,230 460,215 440,215;400,262 500,262 490,245 550,245 530,230 590,230;405,93 405,105;450,200 510,200 515,185 550,170 490,170;R 488,160 540,190;R 540,205 592,237;520,200 550,215;420,125 510,125 500,108 530,95 510,95;R 450,120 495,145;480,140 500,160;400,170 460,155 410,155;410,47 530,47;R 415,38 540,52;440,30 475,30;500,15 500,30;525,62 575,62 590,78 610,93;530,15 600,15 610,30 640,32 650,47 670,62 690,70;540,155 600,155 600,140 560,140;R 597,105 630,130;575,140 630,125 620,108;605,108 660,108 650,93 710,93;620,170 580,185 620,185 660,185 680,170 700,155 745,155;R 705,130 770,145;R 720,110 745,130;700,93 710,108 735,115;760,110 820,110 840,93 855,78 850,62 890,47 930,47;770,125 790,155;765,155 810,155;R 775,160 828,195;660,215 600,200 640,200;700,200 720,215 730,215;R 760,190 825,200;740,200 770,195;R 828,193 882,235;R 578,238 630,250;R 597,250 647,265;625,245 680,245 690,230 730,215;580,275 660,275;720,275 770,275 770,262 800,245 830,230 880,230;R 640,283 738,295;R 668,295 700,315;R 650,313 718,325;630,337 660,330 720,337;610,352 640,352;735,340 740,352 765,365 785,380;785,385 785,475 765,480 765,520 745,530 745,565 728,580;865,245 900,245 920,262 880,262;910,245 970,245;940,230 1010,230 1000,215 1060,200 1050,185 1100,185 1090,170 1130,155 1150,155 1110,155;1130,140 1190,140 1185,125 1205,125 1210,108 1240,108;1230,93 1280,93 1280,78 1300,78 1290,62 1330,62 1340,47;1350,32 1520,32 1520,47 1560,47;1120,17 1310,17 1310,32 1340,32;1215,0 1215,50;1395,0 1395,25;R 1170,40 1220,52;810,155 900,155;R 850,130 900,160;855,108 855,125;820,100 830,93;R 810,15 870,25;900,5 930,15 925,40;830,30 860,32;900,125 910,108 950,108;940,93 990,93 985,78 1010,62 1060,62;R 900,165 952,190;860,170 930,170;880,185 900,200;R 880,205 895,240;R 935,190 965,205;950,210 1010,215;960,155 1010,155 1005,140 1040,130 1060,125;1030,125 1040,108 1130,108;R 1082,90 1133,112;1120,115 1125,130;1155,130 1170,130;1040,40 1050,62 1080,75 1095,90;1125,78 1150,78 1150,62 1185,62;1520,47 1560,47;75,380 250,380;81,380 81,440;60,420 80,420;60,410 80,410;99,365 99,380;188,365 188,380;150,395 215,395;R 236,388 287,418;200,410 240,410;243,410 243,480;75,442 140,442 140,457 200,457;R 218,460 250,480;180,472 250,472;250,427 320,427 320,442 375,442 370,457 387,460 387,505;207,480 207,500;180,503 230,503;240,490 300,490 300,503 390,503;R 165,512 197,530;215,518 265,518;R 345,510 410,525;R 345,500 395,515;170,530 170,555;R 218,510 232,570;270,533 340,533;R 380,525 465,540;R 320,520 342,565;R 250,540 300,555;R 145,557 230,570;R 270,540 285,570;300,563 360,563;R 380,555 430,570;R 395,540 430,555;R 450,545 540,555;R 165,570 175,600;130,578 180,578;135,595 135,605;R 180,572 195,600;R 230,570 250,600;R 285,570 320,585;R 325,570 342,630;R 380,570 395,645;R 400,570 430,585;R 470,555 500,600;R 485,555 600,570;R 150,595 200,605;R 240,595 320,600;R 430,572 485,585;R 540,570 555,630;R 110,603 145,618;R 175,603 195,615;R 215,603 250,615;R 270,603 285,630;R 395,603 430,615;R 432,590 450,645;R 485,590 500,640;R 540,590 640,600;575,578 610,578;R 485,603 520,615;R 95,618 125,645;R 190,618 270,628;R 290,615 345,628;R 360,618 395,632;R 400,622 485,630;R 430,632 485,645;R 540,603 560,645;R 560,603 660,618;R 580,612 610,645;R 95,633 180,645;R 235,628 250,645;R 308,632 380,645;R 345,632 410,675;R 395,645 430,660;R 165,648 235,660;R 290,645 320,660;R 270,660 305,675;R 415,645 450,675;R 430,660 470,675;R 485,640 500,690;R 500,648 540,660;R 540,648 610,660;R 75,648 108,675;R 218,663 285,675;R 285,676 340,690;R 325,690 360,705;R 360,680 430,690;R 375,690 395,705;R 380,708 450,720;R 450,675 465,705;R 432,693 480,705;R 470,663 540,675;R 485,690 500,740;R 430,723 500,735;R 500,693 540,705;R 535,663 555,720;R 540,680 610,690;R 555,708 610,720;R 595,660 610,690;R 470,738 540,750;R 560,723 630,735;R 540,708 560,735;R 615,738 650,750;R 450,753 480,785;R 470,750 485,765;R 525,753 540,800;R 505,768 540,780;R 525,753 590,765;R 580,768 640,780;R 475,783 530,815;R 520,783 560,800;R 560,783 590,795;R 520,800 575,830;R 575,800 610,812;R 415,813 505,828;R 470,828 500,840;R 450,800 475,815;R 575,815 610,828;R 578,830 592,842;R 430,798 448,812;R 612,618 680,630;R 595,648 640,660;R 612,693 640,705;R 630,708 650,720;R 648,600 665,960;R 648,720 683,770;R 665,708 770,720;R 670,618 720,630;R 665,648 700,660;R 685,680 700,705;640,670 850,670;R 632,783 665,795;760,716 770,730 840,730;640,776 880,776 880,791 1110,791;855,630 855,710 837,720 837,925;747,780 747,910;725,853 747,853;660,838 740,838;870,625 950,625 950,640 1060,640 1060,655 1180,655 1185,670 1205,670;945,650 945,700 927,710 927,925;1035,650 1035,700 1017,710 1017,925;1125,640 1125,710 1107,720 1107,925;1125,625 1143,625 1143,550;R 1135,513 1223,555;1197,485 1197,513;830,928 1190,928;1310,686 1450,686 1450,670 1560,670;1395,690 1395,730 1377,740 1377,925;1485,680 1485,715 1467,720 1467,795;1370,806 1560,806;1300,928 1385,928;1555,690 1555,910;1540,925 1540,940;R 235,765 268,797;255,806 320,806 320,822 370,822 370,838 430,838;740,913 830,913;60,838 120,838;110,853 180,853 175,868;230,853 215,838 265,838 265,853 320,853 320,868 370,868;R 197,845 232,872;120,883 145,883 135,865;190,868 235,868 225,883;155,883 210,883;188,895 188,920;R 235,875 310,890;R 270,890 360,902;R 60,907 125,935;60,928 210,928;R 130,937 630,947;R 360,877 430,900;R 345,892 485,915;R 325,907 540,920;R 345,920 575,937;R 325,950 555,965;R 310,960 412,995;R 345,995 375,1010;R 452,965 538,980;R 183,945 287,965;R 165,980 180,1025;190,965 190,990;365,1019 430,1019 430,1040;R 75,1012 180,1025;275,973 320,973;60,1003 100,1003;615,958 880,958 880,973 1365,973 1365,988 1560,988;R 632,905 660,920;657,930 657,990;670,943 680,943;R 55,1027 142,1087;R 95,1087 142,1100;R 90,1087 125,1208;82,1140 82,1160;99,1210 99,1235 81,1240 81,1277 160,1277 160,1292 210,1292;225,1195 225,1277 200,1277;207,1290 207,1370 190,1370 190,1398 207,1400 207,1460 225,1460 225,1490;215,1307 355,1307 355,1322 535,1322 535,1337 690,1337;423,1330 423,1415 405,1420 405,1485 430,1490;R 235,1392 325,1435;R 235,1435 270,1450;R 308,1437 378,1465;R 308,1420 342,1440;210,1413 235,1413;375,1460 400,1460;513,1095 513,1080 590,1080 600,1110 660,1110 657,1080;549,1090 549,1110;630,1110 630,1130 603,1140 603,1175;638,1045 638,1065 860,1065 860,1080 1330,1080 1330,1095 1560,1095;R 667,998 700,1070;700,1003 820,1003;819,965 819,1140;R 667,1210 700,1270;700,1216 810,1216;690,1277 910,1277 909,1170 960,1170 960,1155 1040,1155 1035,1185;909,985 909,1100;999,985 999,1100;1089,985 1089,1185 990,1185;1000,1170 1000,1180;1179,985 1179,1080;1290,988 1269,988 1269,1125;1251,1125 1275,1125;1359,990 1359,1110;1449,990 1449,1085;1540,990 1540,1125 1521,1130 1521,1200 1460,1200;1071,1190 1071,1445;1071,1292 1150,1292;1071,1368 1160,1368;1125,1300 1125,1360;R 1153,1285 1187,1380;R 1153,1380 1170,1480;R 1172,1437 1187,1480;1143,1245 1143,1290;1179,1245 1179,1270 1150,1280;1080,1475 1187,1475;1089,1455 1089,1475;891,1280 891,1307 915,1310 927,1330 927,1385 945,1390 945,1430 970,1430;880,1352 1070,1352;R 958,1332 1025,1345;891,1360 891,1420;R 847,1422 900,1465;R 955,1438 1062,1465;900,1460 960,1460;R 620,1468 915,1480;675,1350 675,1440;711,1345 711,1430 690,1430;657,1480 657,1490;R 650,1437 683,1475;620,1410 620,1470;R 595,1360 647,1405;R 595,1405 630,1418;560,1368 600,1368;R 580,1345 610,1360;620,1352 690,1352;549,1385 549,1398 600,1398;1143,1160 1143,1110 1240,1110;1251,1120 1251,1215 1233,1220 1233,1277 1251,1290 1275,1307 1290,1322 1395,1322 1395,1307 1435,1307 1430,1292 1449,1285 1449,1170;R 1172,1110 1223,1160;R 1190,1155 1223,1178;R 1250,1150 1350,1178;1350,1170 1450,1170;R 1315,1178 1350,1238;1377,1180 1377,1230 1330,1230;1485,1120 1485,1200;1460,1230 1540,1230 1540,1280 1521,1290;R 1495,1235 1512,1310;R 1495,1285 1530,1312;R 1315,1325 1350,1480;1323,1480 1323,1490;1350,1337 1365,1337;R 1422,1377 1512,1450;R 1512,1392 1530,1450;1415,1445 1400,1460 1377,1475 1377,1490;485,442 600,442;513,440 513,395 531,390 531,352 590,352 590,367 680,367;620,367 620,385 603,395 603,440;560,457 645,457 650,472 780,472;670,380 790,380;R 740,380 790,400;R 685,380 718,400;693,400 693,440 675,445 675,465`,
dark: `R 685,72 718,85;130,170 155,170 155,155 190,155 190,140 215,140 215,125 245,125 245,108 265,108 265,93 300,93 300,78 320,78;R 310,25 340,38;R 325,38 395,52;R 308,52 375,70;R 375,25 412,38;R 362,72 448,82;388,90 388,90;R 722,25 810,38;R 738,38 775,52;R 722,52 735,55;R 705,55 735,70;R 758,55 790,70;780,78 800,85 800,95;R 705,10 735,25;670,3 710,5;800,10 800,15;560,3 590,3;960,15 1080,15;1065,17 1115,17;1020,30 1050,47;1485,0 1485,35;740,337 790,337 790,322 805,322 800,305 840,305 840,290 880,290 880,275 915,275;615,578 660,578 660,594 735,594 730,625;735,610 825,610 825,625 860,625;712,635 712,660;1205,670 1290,670 1290,686 1305,690 1305,745 1287,750 1287,925;1215,680 1215,755 1197,765 1197,780;1120,791 1190,791;1300,791 1345,791 1345,806 1365,806;1210,928 1295,928;1390,928 1490,928 1490,943 1521,943 1521,905;1467,800 1467,925;1555,943 1555,943;75,686 105,686;R 95,693 160,705;75,716 210,716;R 110,708 215,722;R 110,725 160,735;R 165,738 230,752;R 180,723 300,735;R 255,723 285,750;R 255,738 322,750;R 272,695 305,705;279,710 279,735;R 220,753 250,767;310,760 375,760 375,776 430,776 430,791 450,791;415,853 480,853 480,868 540,868 530,883 610,883 605,898 625,898;600,838 645,838;R 667,890 683,915;680,913 735,913;R 667,950 683,995;R 685,1150 700,1165;R 667,1165 700,1208;R 667,1272 700,1328;693,1330 693,1340;1107,1460 1107,1460;1179,1430 1179,1413 1233,1413 1233,1365;1350,1155 1475,1155;R 1440,1090 1458,1150;R 1458,1120 1475,1190`,
blue: `R 290,8 375,24;1197,785 1197,930;1197,791 1290,791;693,1075 693,1145`,
indigo: `635,853 657,853 657,900` } },

{ x: 482, y: 728, sx: 3, sy: 2.529, streets: {
light: `0,32 20,32 20,47 260,47 255,0;75,0 75,40;165,0 165,40;345,105 345,120;R 318,118 335,220;R 300,208 320,265;R 282,250 298,268;R 265,268 298,296;R 247,298 282,342;R 229,345 263,372;R 211,375 245,418;R 193,420 227,450;R 175,450 209,495;R 157,495 191,585;165,590 165,660;320,123 590,123;320,5 405,5;410,17 530,17;490,5 530,5;435,20 435,45 417,50 417,115;525,20 525,45 507,50 507,115;605,3 710,3 705,25;720,17 740,17 740,32 775,32;710,32 690,40 687,130;690,47 765,47 760,63 775,63;580,138 780,138;597,150 579,155 579,250;417,130 417,150 399,160 399,255;507,130 507,150 489,160 489,240;290,260 455,260 455,245 590,245;R 555,240 570,305;R 570,240 585,262;390,305 590,305;270,321 405,321 405,305;561,290 745,290 741,262;669,140 669,250 651,265 651,280;777,105 777,150 759,155 759,260;R 752,225 785,265;735,262 800,262 800,275 820,275 820,290 1090,290;R 790,72 830,85;R 825,72 875,98;790,168 850,168 850,155 870,155;840,155 890,140;R 822,178 858,190;860,108 910,108 900,123 940,135 940,150 965,170;880,123 900,123;R 932,150 945,195;R 840,195 875,205;R 915,193 945,208;785,215 925,215;849,230 870,230;860,245 900,245;R 895,220 930,265;R 912,255 965,267;800,230 785,225;R 930,238 1020,250;R 912,0 1035,12;R 915,12 1035,38;R 895,38 948,55;R 858,55 948,68;960,78 1000,93 1000,108;R 985,60 1000,75;955,63 960,80;980,93 1000,93 1030,110 1015,125 1090,125;1030,0 1030,40 1060,47 1065,78 1090,80;1083,10 1083,155;1065,130 1065,180;1090,47 1160,47 1160,63 1310,63;1090,108 1270,108;1260,123 1320,123;1000,262 1125,262 1125,275 1215,275 1215,290 1300,290;R 790,0 890,8;1299,240 1299,340;R 1273,330 1308,570;R 1255,570 1290,740;R 1310,40 1325,130;R 1292,102 1325,130;R 1290,208 1308,222;1308,230 1360,230;1350,240 1355,262 1375,275 1380,300;R 1365,280 1398,305;1300,305 1390,305;1370,321 1430,321 1430,337 1500,337;1475,352 1560,352;1530,367 1560,367;1083,240 1083,300 1101,310 1101,575 1083,585 1083,710;950,352 1100,352;1110,367 1160,367 1160,382 1325,382;1325,397 1375,397 1375,412 1430,412;1385,427 1500,427 1500,442 1560,442;R 1040,360 1073,390;1047,395 1047,412 1025,412 1011,430 1011,500 993,510 993,530 975,533 975,548 930,548;1191,390 1191,570 1173,580 1173,720;1110,472 1160,472 1160,487 1250,487 1250,472 1320,472 1320,457 1400,457;1090,500 1080,518 1060,530 1050,545 1030,550 1011,565 1011,580 990,594 985,610;950,610 1220,610;1220,594 1340,594;R 1220,590 1290,628;1340,579 1410,579 1410,565;R 1328,555 1343,585;960,610 955,625 930,640 905,655 880,670;993,615 993,700;1137,635 1137,720;R 1165,620 1180,722;R 1200,632 1235,735;1115,730 1235,730;1025,715 1140,715;990,700 1035,700;770,686 855,686;777,690 777,820;785,776 840,776 830,791 870,791;0,670 390,670;625,670 820,670;R 373,648 640,662;R 355,632 660,645;R 480,617 605,632;445,610 530,610;555,610 620,610;R 390,450 425,478;425,472 495,472;430,487 460,487;445,502 515,502;500,518 550,518;430,533 480,533;R 535,527 588,540;465,548 590,548;610,548 655,548 650,533 730,533 720,518 745,518;R 570,555 622,570;597,575 597,590;570,594 640,594;R 665,603 693,615;R 645,617 675,630;R 138,678 173,800;57,930 57,700 75,690 75,680;0,806 140,806;R 158,800 173,815;R 175,765 191,900;175,760 255,760 255,730 220,730 220,755;255,765 255,885 235,890;230,913 570,913;180,838 550,838 540,853 640,853;363,845 363,895 340,898;175,898 240,898 240,910;381,760 381,730 550,730 540,715 605,715;590,730 640,730 640,755 615,760 615,830 633,840 633,930;380,760 400,760 395,776 455,776 455,791 475,800 490,810 490,830;705,755 705,790 687,795 687,860;610,868 690,868;690,853 750,853;555,898 750,898;735,913 800,913 800,898;735,838 800,838;750,822 785,822;R 787,845 818,862;R 805,862 825,890;R 805,875 838,890;785,790 800,800 825,815;R 738,905 770,920;849,800 849,860 870,868 880,905 905,915 905,940;0,988 405,988 405,1003 970,1003;155,943 350,943 350,958 930,958 930,943 1020,943;489,925 489,950;579,925 579,950;669,925 669,950;759,925 759,950;849,925 849,945 830,943;417,940 417,950;490,928 510,928;40,925 40,945;870,806 980,806 980,822 1070,822 1070,838 1180,838;R 860,800 980,812;R 915,810 948,825;R 897,830 948,845;R 897,845 965,875;R 915,875 983,890;R 930,885 965,915;R 985,890 1035,935;R 1040,840 1180,875;R 1040,875 1092,900;R 1075,890 1160,920;R 1092,905 1145,915;960,935 990,935;1180,853 1240,853;1155,875 1155,890;R 1220,875 1250,890;1160,898 1290,898;1030,928 1110,928;R 1238,785 1272,920;1263,755 1263,785;1280,776 1280,806 1300,806 1300,838 1320,838 1320,865;1285,868 1320,868;1280,830 1290,838;1020,973 1110,973 1100,958 1140,958;1140,960 1137,995;980,988 1050,988;1250,945 1320,943;1250,928 1345,928;1250,970 1270,970;1245,980 1245,1005;1060,1003 1520,1003;39,990 39,1085;R 120,985 155,1118;183,1000 183,1085;237,1000 237,1085;0,1095 250,1095;39,1100 39,1120 21,1130 21,1200 0,1200;0,1230 39,1230 39,1280;R 0,1278 28,1312;R 0,1235 12,1290;R 0,1392 28,1450;0,1385 10,1385;130,1120 130,1155 150,1155 150,1170 190,1170;219,1100 219,1335 201,1345 201,1385;130,1246 470,1246;450,1262 910,1262;399,1010 399,1215 381,1220 381,1395;309,1255 309,1275 291,1280 291,1395;489,1010 489,1170 471,1175 471,1390;450,1383 471,1383;R 497,1058 533,1088;579,1010 579,1105;561,1115 561,1325 543,1335 543,1390;669,1010 669,1045 651,1055 651,1260 633,1270 633,1405;741,1010 741,1210 723,1215 723,1405;831,1010 831,1170 813,1180 813,1400 790,1398;921,1010 921,1105 903,1115 903,1335 885,1345 885,1400;390,1110 765,1110 765,1125 1300,1125;993,1125 993,1270;985,1140 1055,1140;1065,990 1065,1120;1155,1010 1155,1030 1137,1035 1137,1250;1245,1000 1245,1040;R 1220,1045 1252,1190;1227,1190 1227,1400;730,1352 815,1352;900,1018 930,1018;1047,1145 1047,1155 1065,1160 1065,1185 1090,1188;910,1277 1000,1277;R 1130,1255 1235,1283;R 1202,1285 1235,1360;970,1352 1235,1352;975,1355 975,1405;175,1398 585,1398 585,1413 1075,1413 1060,1428 1140,1428;1101,1360 1101,1398 1119,1400 1119,1420;1135,1443 1155,1443 1155,1475 1180,1475;1209,1413 1209,1425;1220,1413 1290,1413 1280,1398 1340,1398 1330,1383 1415,1383 1405,1368 1485,1368 1485,1352 1540,1352 1530,1337 1560,1337;195,1383 205,1383;1317,1010 1317,1035 1335,1045 1335,1065 1355,1070 1355,1095 1300,1110 1290,1120;1389,940 1389,985 1407,990 1410,1035 1425,1040 1430,1065 1440,1075;1440,885 1443,925 1460,930 1460,960 1479,965 1479,980 1497,990 1500,1018 1525,1025 1530,1065;1530,990 1560,990;R 1418,1072 1500,1085;R 1360,1088 1470,1102;R 1418,1088 1470,1110;1440,1080 1540,1080;1370,1105 1375,1125 1389,1140 1389,1170 1407,1180 1407,1215;1470,1110 1460,1125 1480,1130 1480,1150 1500,1160 1500,1185;1475,1185 1550,1185 1540,1170 1560,1170;1280,1140 1300,1140 1300,1165 1320,1185;R 1310,1190 1325,1250;R 1310,1195 1340,1240;1330,1215 1450,1215;1400,1200 1560,1200;1230,1246 1320,1246;1290,1230 1320,1230;1317,1250 1317,1368 1335,1370 1335,1385;1350,1220 1350,1260 1370,1265 1370,1300 1389,1310 1389,1340 1407,1345 1407,1380;1440,1220 1440,1250 1460,1260 1460,1290 1480,1300 1480,1325 1497,1335 1500,1350;1530,1210 1530,1240 1550,1250 1550,1275;R 1360,725 1380,755;1220,745 1360,745;1365,715 1430,715;R 1400,695 1450,765;R 1418,695 1530,705;R 1400,735 1420,755;1330,760 1470,760;1410,776 1560,776;1530,791 1560,791;1480,686 1560,686;1525,700 1525,715 1545,720 1560,760;1317,490 1317,510 1335,520 1335,565 1360,579;1365,595 1365,610 1380,620 1390,650 1405,655 1410,680 1430,686;1389,440 1389,480 1407,490 1410,520 1425,530 1425,560;1400,563 1480,563;1440,570 1440,600 1460,610 1465,640 1480,645 1490,670 1500,680;1460,430 1460,470 1480,475 1490,510 1510,515 1515,533 1550,533;1475,548 1540,548;1530,560 1530,580 1550,590 1550,615;1340,442 1400,442;1310,470 1325,470;R 1410,440 1415,445;R 1390,72 1410,140;R 1382,132 1430,160;R 1400,130 1418,195;R 1365,20 1380,38;R 1400,0 1433,10;1389,20 1400,32 1400,70 1415,80 1415,120;1415,15 1430,40 1440,75 1440,110;R 1417,108 1465,130;R 1455,10 1470,60;R 1437,55 1468,85;R 1437,72 1450,100;R 1455,85 1485,125;1380,5 1400,20;R 1365,30 1395,40;1500,5 1515,10 1515,40 1535,50 1535,80 1555,90 1555,105;1330,60 1330,80 1350,85 1350,110 1370,110 1380,130;1410,190 1430,200 1430,220 1443,230 1443,260 1460,270 1470,300 1490,310 1490,335;1490,130 1490,155 1510,160 1510,190 1530,200 1535,240 1560,245;1460,105 1560,105;1480,123 1520,123;1350,898 1430,883;1350,898 1350,913 1300,913 1300,928 1345,928;1350,913 1380,910 1380,940;1400,883 1430,883`,
dark: `R 282,0 318,38;309,35 309,205;250,63 310,63;320,108 335,108;R 282,225 298,252;535,17 600,17 597,130;600,32 695,32;950,155 980,155;970,170 990,170 990,185 1015,185 1015,200 1050,200;R 1040,205 1090,220;R 1057,220 1090,235;R 1075,160 1090,250;R 1057,178 1080,190;1083,170 1300,170;1083,230 1300,230;R 1290,132 1325,195;R 1310,193 1342,222;1325,155 1380,155;R 1310,0 1342,38;1080,5 1375,5;860,686 925,686 920,700 985,700;849,690 849,780;147,800 147,880;R 120,875 155,980;R 85,905 120,945;50,943 120,943;R 10,905 28,945;0,943 20,943;1150,958 1173,958 1173,990;1245,925 1245,960;129,1165 129,1250;111,1245 111,1325;111,1440 111,1460 147,1460 147,1413 205,1413;R 157,1378 190,1404;175,1368 205,1368;327,985 327,1050 309,1055 309,1250;250,1095 290,1095 290,1110 390,1110;R 930,1012 983,1025;975,985 975,1030;R 983,1025 1000,1055;R 1003,1055 1018,1070;1011,1075 1020,1095 1029,1100 1029,1130;1083,1195 1083,1230 1101,1235 1101,1290 1083,1295 1083,1340;1005,1277 1125,1277;1209,1365 1209,1400;1150,1428 1200,1428;1210,1443 1191,1443 1191,1475;1371,770 1371,791 1389,800 1389,820 1405,822;R 1400,830 1485,843;1475,822 1560,822;1550,806 1560,806;1330,868 1360,853 1430,853;1440,883 1490,883 1475,868 1525,868;R 1510,875 1540,890;1533,890 1533,905;1550,910 1550,945`,
blue: `111,1120 111,1235;1525,868 1560,868 1550,853`,
cyan: `129,1255 129,1335 111,1340 111,1370`,
sea: `111,1380 111,1430;111,1398 150,1398`,
indigo: `1150,943 1230,943 1230,925;1209,945 1209,975` } },

{ x: 982, y: 728, sx: 2.9037, sy: 2.529, streets: {
light: `15,0 15,25 32,35 32,60 50,70 50,85;100,0 100,20 118,25 118,50 135,60 135,85;185,0 185,20 205,25 215,47 235,55 240,100 255,110 258,140 275,145 275,170 293,175 293,215 310,225 310,250 328,255 330,285 345,290;40,93 150,93 150,78 250,78;R 215,47 248,60;300,0 290,25 310,30 310,47;270,5 385,5 380,20;300,30 320,47 325,85 340,95 345,140 360,145 363,180;285,60 300,60;R 390,25 413,38;380,30 400,55 420,60;R 443,0 490,20;R 410,25 440,40;R 410,60 450,70;455,60 480,75;430,65 430,125;R 460,80 510,95;R 480,20 510,45;R 495,45 525,80;R 495,75 530,100;R 495,100 545,115;R 478,115 632,130;370,47 410,47;490,5 525,5;548,10 560,15 565,35 590,45 590,70 605,80 610,115;640,0 660,10 665,35 680,45 680,65 695,70 695,85;R 600,95 630,110;720,78 760,78 760,63 800,63;740,3 820,3;820,0 820,125;665,20 745,20 740,5;800,63 860,63 850,47 960,47;650,108 650,93 740,93 735,78;R 910,28 970,40;960,30 960,95;R 948,70 985,105;980,93 985,125 1000,135 1005,155;985,20 1010,5 1050,5;1035,5 1035,45 1055,50 1060,80;R 1055,75 1085,95;R 1072,95 1100,130;1130,5 1130,30 1145,40 1150,65 1165,75 1165,95;1060,0 1130,0;1150,93 1190,108 1195,130;R 1172,88 1190,120;R 1120,117 1190,130;1005,155 1125,155;R 1000,145 1135,160;1190,135 1205,145 1205,170 1220,180 1230,210 1245,215 1245,240 1265,250 1270,275 1285,285 1290,315 1300,320 1310,350;1220,5 1220,25 1235,30 1240,60 1250,65 1260,90 1270,130 1290,140 1290,165 1305,175 1310,195 1325,200 1330,230 1345,245 1350,270 1370,275 1375,310 1390,320 1390,350;1300,0 1310,30 1325,35 1330,65 1340,70 1340,90 1360,100 1360,130 1375,135 1380,160 1400,170 1400,200 1410,210 1415,240 1430,245 1435,275 1450,280 1455,300 1475,310 1480,335;1390,3 1400,15 1415,25 1420,50 1440,60 1440,95 1460,105 1460,130 1475,140 1480,170;1500,170 1500,200;1410,200 1500,200;R 1312,208 1430,220;1200,93 1360,93;1260,93 1360,93 1345,78 1390,70 1440,63 1380,63;1110,165 1120,200 1135,210 1140,235;R 1120,200 1150,220;R 1138,220 1165,250;R 1152,238 1185,265;R 1155,250 1280,265;R 1262,238 1330,250;1080,305 1170,290 1160,275;1020,170 1020,195 1035,205 1040,230 1055,240 1060,265 1080,270 1085,305 1100,310 1100,340 1112,350 1112,385;1085,150 1100,170 1120,185;975,305 1050,305 1050,290 1085,290;895,123 910,123;830,125 905,125 900,108 990,108;740,155 740,140 820,140;670,155 755,155;645,170 670,155;R 750,155 822,160;760,170 790,170 790,155 830,155;880,200 885,185 960,185 950,170 1030,170;840,170 900,150;640,140 640,170 670,180 680,200;R 615,175 665,190;R 670,193 710,210;R 670,210 755,235;755,215 830,215 810,200 880,200;750,235 760,245;845,215 870,220 870,245 885,250 885,300;760,200 755,185;935,190 935,215 950,220 955,245 970,250 975,280 990,285 990,310;770,250 790,260 795,275 840,275 840,290 885,290;R 860,298 912,310;R 895,313 965,328;R 930,300 1000,312;840,337 960,337;870,337 800,352 770,367;850,345 850,385 870,390 870,430 885,440 890,470;R 950,325 962,435;R 948,345 1000,355;950,367 965,400 975,430;1000,367 1020,382 1090,382 1100,367;890,442 1070,442;890,442 900,472;820,487 930,487;900,480 920,505 935,515 940,580;850,500 850,575;990,445 1000,460 1005,490 1020,495 1025,530 1040,540 1045,570;20,108 100,108;5,125 10,110;5,140 5,125;15,150 15,195 32,205 32,240 50,250 50,275 65,285 70,310;R 60,115 90,140;85,140 85,160 105,170 105,200 120,210 120,235 140,245 145,265;150,100 155,125 170,130 175,160 190,170 195,200 210,210 220,235;R 215,225 310,235;R 235,235 250,250;250,240 240,265 260,280 260,300 275,310 275,325;110,305 140,305 140,290 175,290 165,275 200,275 200,262 180,262;170,290 175,320 190,330 190,350;R 80,310 120,325;60,320 90,325 95,337;90,337 155,337 150,322;0,325 5,335;0,352 80,352;20,365 100,365 100,340;R 180,345 290,360;R 100,362 230,375;R 95,375 160,390;R 130,390 230,402;R 200,375 230,390;133,412 133,430 150,435 155,465;285,352 300,337 370,330;300,360 305,385 320,390 325,410;R 320,298 460,312;310,262 380,250;340,290 345,305;330,185 350,170 400,170 380,155;R 340,178 385,192;410,155 480,155 480,140 500,125;R 480,125 500,145;380,185 385,215 400,225 400,250 420,260 420,285 435,290;465,160 465,185 485,195 490,225 505,235 510,265 520,275;570,160 570,195 585,200 585,230;545,140 560,155;R 548,140 575,170;R 565,175 580,250;R 585,240 660,250;R 565,252 620,268;440,290 530,290 520,275 600,275;455,305 465,330;440,315 465,325 465,345 485,355 490,385 500,390 505,412;370,310 370,345 385,355 390,390 405,395 410,425;530,290 540,325 555,335 560,360 575,365 580,395 600,405;620,280 625,310 640,320 640,345 655,355 660,385;R 652,360 735,390;R 583,390 765,402;690,250 710,270 710,300 725,310 730,335 740,345 745,375 760,385;R 740,345 850,358;R 720,362 780,375;770,400 780,405 785,430 800,440 800,465 820,470 820,490;690,400 695,425 710,435 715,465 730,470 730,510;605,410 610,435 620,445 625,500;410,427 480,440 490,440 500,427 530,427 535,412 600,412;340,440 385,440 380,457 490,457;R 425,440 490,455;430,472 510,472 500,487 590,487;R 565,483 630,495;600,518 770,518 760,503 730,503;R 618,495 640,530;635,533 725,533;565,548 715,548;R 445,557 575,583;720,548 790,548;R 740,532 780,545;770,562 835,562 835,578 890,578;R 880,572 945,615;940,594 1050,594;830,578 945,578;1040,578 1170,578;0,440 60,440;45,457 90,457;60,472 180,472 180,487 115,487;R 115,457 180,478;95,487 95,500;0,490 20,515;R 0,515 40,540;0,548 85,548 80,533 190,533 250,518;160,503 280,503;R 75,512 180,528;200,518 290,518;290,533 310,548;250,518 320,518 370,518 370,533 455,533;380,548 460,548;30,548 35,580 50,590 55,610 70,620 70,645;118,550 118,580 135,590 135,610 150,620 155,640 170,640;R 80,633 250,645;R 60,645 90,655;250,625 370,625;330,610 375,600;310,525 310,565 325,575 330,605;320,610 375,610 370,594 450,594;R 385,575 435,590;415,550 415,590;430,595 430,630 450,635 450,655 465,660 470,695;R 495,585 565,600;520,590 520,610 535,615 540,640 555,650 560,665;565,562 580,580;600,595 605,610 680,610;630,625 740,625;680,625 690,640 770,640;720,655 755,655;470,640 500,640 490,625 550,625;600,655 740,655;560,670 680,670;570,686 630,686;480,700 560,700;R 495,680 545,692;425,716 500,716;R 370,650 450,655;370,640 380,655 450,655;345,630 350,655 365,665 370,685 380,690 385,710 400,720;R 340,633 370,645;90,655 95,690 115,700 118,730 130,735 135,755;R 100,662 200,675;R 130,648 165,660;185,675 190,700 210,705 215,730 230,740 235,755;0,655 20,665;40,670 30,686 75,686;0,700 30,705 30,740 45,750;20,686 10,715;R 23,723 90,737;160,728 220,728;R 130,757 248,768;R 130,770 248,783;R 285,737 370,750;R 250,752 340,765;R 320,765 440,780;R 370,757 440,765;430,716 420,745 495,745;R 408,715 440,735;510,730 500,755;R 460,755 512,765;0,776 70,776;70,791 180,791;R 40,785 175,797;60,806 125,806;230,806 310,806 310,791 340,791;R 165,815 250,830;R 180,830 250,845;R 180,845 320,862;R 145,860 320,873;R 200,875 320,890;R 250,888 335,920;R 232,920 320,935;R 232,935 320,950;205,880 210,895;215,905 230,905 225,930;320,928 410,928 400,943;R 388,937 440,950;180,958 235,950;380,905 380,920;R 425,920 440,940;R 545,805 667,845;R 632,770 685,815;R 600,783 685,815;R 425,830 495,860;R 475,815 545,845;R 545,845 720,860;R 545,860 650,875;R 510,875 632,888;720,853 745,853;R 720,830 755,845;R 475,888 530,905;R 460,905 495,920;R 530,888 545,905;740,800 745,860 765,870 765,895;755,806 790,806;R 755,890 930,902;R 775,905 890,918;760,730 785,730 780,716 840,716;835,720 835,745 855,750 855,775 880,785;R 865,785 980,797;900,800 905,815 920,820 920,850 940,855 940,885;R 912,770 1085,782;R 895,783 912,812;1035,745 1105,745;R 1070,755 1085,810;1080,805 1095,815 1100,835 1115,840 1120,853;1020,853 1150,853 1150,838 1240,838 1235,868 1400,868;R 1120,830 1240,843;R 1072,800 1100,812;1030,855 1025,885 1045,890 1050,905;R 1055,890 1150,900;1050,912 1170,912;1140,898 1150,890 1240,885 1250,905 1245,945;R 1155,875 1260,888;1080,925 1130,943 1125,925 1200,925 1190,912 1240,905;980,943 1080,943;970,958 1030,950;R 1210,955 1278,985;1120,958 1050,970 1120,970;1030,958 1035,985;1265,890 1280,915 1295,920 1300,945 1320,955 1325,970;R 1350,975 1360,985;1310,870 1315,890 1330,900 1330,925 1345,935 1350,975;R 1335,980 1362,1015;R 1360,1010 1385,1040;R 1105,985 1290,995;R 1280,985 1295,1035;1290,1034 1430,1034;1450,1019 1360,1019;1400,1003 1465,1003;925,670 865,670;885,655 990,655 990,640 1130,640;1090,625 1120,625;1110,655 1155,655;880,670 920,670 915,686 1010,686;980,686 990,700 1060,700;1020,716 1080,716 1080,735;1110,716 1075,730 1135,730;1110,716 1070,716;1115,745 1190,745;1180,760 1240,760;1230,776 1295,776 1290,791 1320,791;1310,806 1345,806 1340,822 1360,830 1365,850 1385,855 1390,885 1405,890 1405,910 1420,915 1425,945 1440,950 1445,985;1250,686 1330,686 1320,670;1300,700 1375,700;1350,716 1410,716 1408,735;R 1125,540 1205,570;R 1205,555 1225,570;1170,565 1220,565;R 1195,480 1210,545;1205,512 1225,515;R 1225,480 1242,505;R 1140,405 1245,418;R 1245,405 1275,450;R 1225,385 1260,418;R 1210,375 1245,385;R 1070,400 1120,430;1110,440 1120,450;1075,430 1080,460 1095,465 1100,500 1110,510 1115,535;1100,405 1120,395;1130,445 1130,490 1145,500 1145,510;1165,510 1165,535;1130,440 1150,470 1150,485 1165,495;1110,340 1130,320;1180,367 1210,367;1200,352 1280,352;R 1212,360 1240,385;1250,360 1260,385 1275,400;1285,460 1290,500;R 1295,498 1420,522;R 1300,525 1365,540;R 1315,540 1348,555;1340,570 1355,580 1355,600;1345,340 1360,350;1300,355 1310,385 1325,390 1330,410 1345,420 1350,450 1370,455 1375,500;R 1280,360 1400,373;R 1380,345 1470,355;1395,372 1405,395 1420,400 1425,425 1440,430 1445,460 1465,465 1470,485;R 1360,498 1485,508;1470,487 1485,487 1480,470;1480,335 1500,337;1490,320 1480,340;1360,343 1390,350;1360,390 1370,412;R 528,905 562,980;R 740,935 770,955;R 740,950 788,980;R 770,980 895,993;R 720,998 825,1008;R 790,1005 825,1020;870,973 960,973 950,958 985,950;1040,960 1045,1020;R 1005,1010 1155,1020;R 1000,1020 1155,1035;R 1055,1035 1110,1055;950,1034 1050,1034;940,1050 955,1060 955,1110 1065,1110;R 950,1088 1070,1100;930,1048 970,1048;1060,1095 1090,1080 1210,1080;1075,1060 1080,1080;1160,1064 1260,1064;1230,1050 1380,1050;R 548,998 650,1008;R 528,1012 597,1025;R 528,1025 597,1040;R 548,1040 615,1070;R 580,1070 615,1085;600,1095 630,1095 625,1080 640,1075 640,1015;640,1030 740,1030 735,1015;650,1019 765,1019;R 770,1015 840,1035;R 805,1040 840,1070;790,1030 825,1035;R 825,1065 860,1080;R 845,1080 860,1105;R 845,1100 875,1150;R 860,1118 960,1148;R 775,1150 910,1160;755,1080 840,1080;710,1110 710,1095 830,1095;710,1110 730,1125 730,1150;R 722,1150 762,1162;R 705,1165 755,1178;R 775,1160 825,1175;755,1187 650,1187;955,1120 1015,1125;R 948,1115 1010,1130;960,1140 955,1170 975,1175 975,1190;930,1200 1000,1200 1015,1185;R 1000,1180 1032,1192;R 880,1210 945,1222;R 830,1225 890,1237;R 860,1235 880,1255;880,1255 880,1285 900,1295 895,1320;1320,1040 1320,1070 1335,1080 1340,1110 1360,1115;1310,1065 1345,1065;1280,1140 1265,1140;1280,1125 1360,1125;R 1312,1115 1360,1148;R 1330,1085 1362,1115;1370,1140 1375,1200;1395,1040 1400,1060 1410,1070 1410,1095 1430,1105 1435,1125 1450,1135 1450,1150;R 1437,1145 1467,1178;R 1365,1180 1450,1190;1320,1200 1410,1200;1400,1195 1405,1235 1425,1245 1425,1265 1440,1275 1445,1300 1460,1305 1465,1330 1480,1335 1480,1370;R 425,940 440,965;R 425,965 458,980;R 443,980 493,1015;R 460,1015 510,1050;R 478,1050 510,1072;R 495,1072 528,1105;R 512,1105 545,1150;R 530,1150 562,1212;R 548,1192 735,1205;R 650,1180 755,1192;715,1205 720,1218 735,1225;730,1230 730,1250;550,1215 565,1230 580,1246;R 600,1205 632,1220;R 600,1220 615,1300;R 583,1230 600,1270;550,1246 590,1246;615,1300 625,1315 625,1330 640,1340;700,1277 770,1277 770,1262 850,1262;R 738,1257 770,1270;825,1246 880,1246;690,1277 690,1307 720,1307;480,1322 480,1307 565,1307 570,1292 630,1292;R 300,998 430,1010;R 285,1013 355,1025;R 268,1028 300,1055;290,1060 290,1075 315,1080;R 300,1100 338,1115;320,1095 400,1095;395,1100 400,1125 415,1130 420,1160;R 388,1163 475,1178;460,1155 540,1155;R 372,1178 405,1205;400,1210 400,1230 410,1240;R 408,1240 495,1250;430,1255 435,1280 445,1290 450,1320;440,1322 480,1322;R 0,983 110,995;20,995 20,1030 35,1050;R 5,1012 35,1050;40,1070 45,1100 60,1110 65,1135 85,1140;105,1000 105,1040 120,1050 125,1080 140,1090 145,1110 155,1130;R 160,985 195,995;R 95,968 195,980;R 165,995 180,1010;190,1015 200,1030 210,1050 220,1070 240,1090 240,1115;R 218,1120 265,1135;R 145,1133 268,1145;R 75,1150 180,1162;R 130,1150 250,1160;R 25,1163 110,1178;R 165,1165 195,1178;0,1160 5,1165;R 0,1180 110,1192;R 95,1190 125,1215;R 5,1200 22,1225;20,1225 35,1240 50,1250 65,1275 65,1315;120,1215 130,1240 140,1270 160,1285 165,1310;190,1185 195,1210 210,1220 215,1240 235,1250 240,1280;250,1140 255,1165 275,1175 280,1205 295,1215 300,1235 315,1240 315,1260;R 285,1272 370,1285;R 218,1287 330,1300;R 303,1258 320,1285;R 355,1258 390,1270;320,1262 310,1255;R 145,1302 268,1315;R 110,1317 180,1328;250,1307 290,1322;R 250,1317 290,1328;345,1290 345,1315 360,1325 365,1345 380,1355 385,1385 400,1395 405,1415 415,1420 415,1460;R 23,1332 110,1343;0,1325 5,1352 40,1352;260,1330 260,1345 275,1355 280,1375 295,1385 300,1410 315,1420 320,1440 330,1450 340,1470;R 338,1468 408,1480;400,1460 455,1460 445,1443 510,1443 500,1428 560,1428;R 388,1455 455,1465;290,965 290,985 310,990 310,1005;235,965 300,965;180,965 180,950;520,1385 520,1368 550,1368;R 530,1350 545,1365;550,1413 580,1413;650,1352 665,1355;640,1325 640,1345;670,1383 715,1383 710,1368 770,1368 760,1352 820,1352 810,1337 870,1337 870,1322 910,1322;920,1330 925,1355 940,1365 940,1400 955,1405 955,1430 970,1435 975,1455;R 965,1450 1000,1465;R 983,1465 1068,1480;R 1035,1452 1130,1465;R 1090,1437 1190,1450;1110,1435 1150,1428 1240,1428 1230,1413 1310,1413 1300,1398 1380,1398 1370,1383 1430,1383 1430,1368 1485,1368;R 1090,1255 1160,1268;1090,1277 1100,1277;1080,1285 1085,1305 1095,1320 1100,1350 1115,1355 1120,1375 1135,1385 1145,1430;1165,1265 1165,1290 1180,1300 1185,1325 1200,1330 1205,1355 1215,1365 1220,1395 1235,1400 1235,1415;1235,1240 1240,1270 1255,1280 1260,1305 1270,1310 1275,1335 1290,1345 1295,1370 1305,1375 1305,1400;1245,1231 1320,1231 1280,1216 1330,1216 1320,1200;1320,1220 1325,1245 1340,1255 1345,1290 1355,1295 1360,1325 1375,1330 1380,1380`,
dark: `215,412 285,412 275,427 330,427 328,442;188,515 188,525 205,530 208,555 222,565 225,590 240,595 240,625;R 1210,465 1245,478;R 1245,465 1278,500;R 1210,475 1225,495;R 1240,497 1295,510;R 1225,512 1295,525;R 1210,525 1312,555;R 1312,555 1330,600;R 1312,585 1345,602;R 1210,603 1362,615;1125,625 1220,625;1355,620 1355,640 1372,645 1375,670 1390,680 1395,700 1415,705;705,745 740,745 725,730 755,730;730,750 730,776 745,780 745,795;520,740 520,776 545,776;570,776 630,776 620,760 680,760;590,791 590,791;537,806 545,806;R 495,845 545,860;R 443,860 493,875;R 478,875 510,888;R 443,890 475,903;450,910 450,915;0,822 50,822 50,806;5,868 15,868;R 8,877 35,890;32,895 35,915 50,920 55,940 68,945 70,965;R 60,967 92,980;R 110,832 180,843;105,850 125,850;R 93,858 112,888;118,890 118,905 130,913;R 110,905 145,920;135,920 140,945;150,940 155,960;328,883 328,883;R 565,1330 597,1343;R 548,1345 580,1358;R 530,1378 597,1404;R 583,1404 615,1420;600,1398 660,1398 660,1378;R 912,1302 998,1313;920,1320 920,1320;R 965,1287 1035,1297;1020,1277 1085,1277;1140,1246 1205,1246 1195,1231 1240,1231;R 983,1313 998,1328;1005,1330 1010,1352 1025,1360 1030,1385 1045,1390 1045,1415 1060,1420;R 1050,1420 1068,1435;R 1052,1437 1085,1450`,
blue: `1125,427 1150,427 1145,442 1190,442 1180,457 1275,457;762,695 762,715;445,806 465,806 460,791 545,791;467,806 467,825;432,895 432,915;25,868 55,868 45,853 90,853`,
cyan: `345,802 345,825;362,853 362,853;380,895 380,900`,
indigo: `R 495,862 545,873;R 443,877 475,888;600,1337 625,1337 625,1368 665,1368`,
navy: `340,791 362,791 362,835 385,840 380,865 400,870 400,883 420,883`,
purple: `415,898 415,898`,
pink: `530,745 560,745 550,730 630,730 620,715 700,715 690,700 750,700 745,685` } }
];

const CELL = 6;
const LAST = 249;
const ctx = document.getElementById('map').getContext('2d');

function toCell(sheet, text) {
  const [px, py] = text.split(',').map(Number);
  return [
    Math.min(LAST, Math.max(0, Math.floor((sheet.x + px / sheet.sx) / CELL))),
    Math.floor((sheet.y + py / sheet.sy) / CELL)
  ];
}

// Walks from patch to patch, one side step at a time.
function drawStreet([x0, y0], [x1, y1]) {
  const dx = Math.abs(x1 - x0), dy = Math.abs(y1 - y0);
  const stepX = Math.sign(x1 - x0), stepY = Math.sign(y1 - y0);
  let x = x0, y = y0, ix = 0, iy = 0;
  ctx.fillRect(x, y, 1, 1);
  while (ix < dx || iy < dy) {
    if ((1 + 2 * ix) * dy < (1 + 2 * iy) * dx) { x += stepX; ix++; } else { y += stepY; iy++; }
    ctx.fillRect(x, y, 1, 1);
  }
}

function fillBlock(sheet, corners) {
  const edge = t => {
    const [px, py] = t.split(',').map(Number);
    return [Math.round((sheet.x + px / sheet.sx) / CELL), Math.round((sheet.y + py / sheet.sy) / CELL)];
  };
  const [x0, y0] = edge(corners[0]), [x1, y1] = edge(corners[1]);
  ctx.fillRect(x0, y0, Math.max(1, x1 - x0), Math.max(1, y1 - y0));
}

for (const color of Object.keys(COLORS)) {
  ctx.fillStyle = COLORS[color];
  for (const sheet of SHEETS) {
    for (const entry of (sheet.streets[color] || '').split(';')) {
      const parts = entry.trim().split(/\s+/).filter(Boolean);
      if (!parts.length) continue;
      if (parts[0] === 'R') { fillBlock(sheet, parts.slice(1)); continue; }
      const cells = parts.map(p => toCell(sheet, p));
      if (cells.length === 1) ctx.fillRect(cells[0][0], cells[0][1], 1, 1);
      for (let i = 1; i < cells.length; i++) drawStreet(cells[i - 1], cells[i]);
    }
  }
}
```
